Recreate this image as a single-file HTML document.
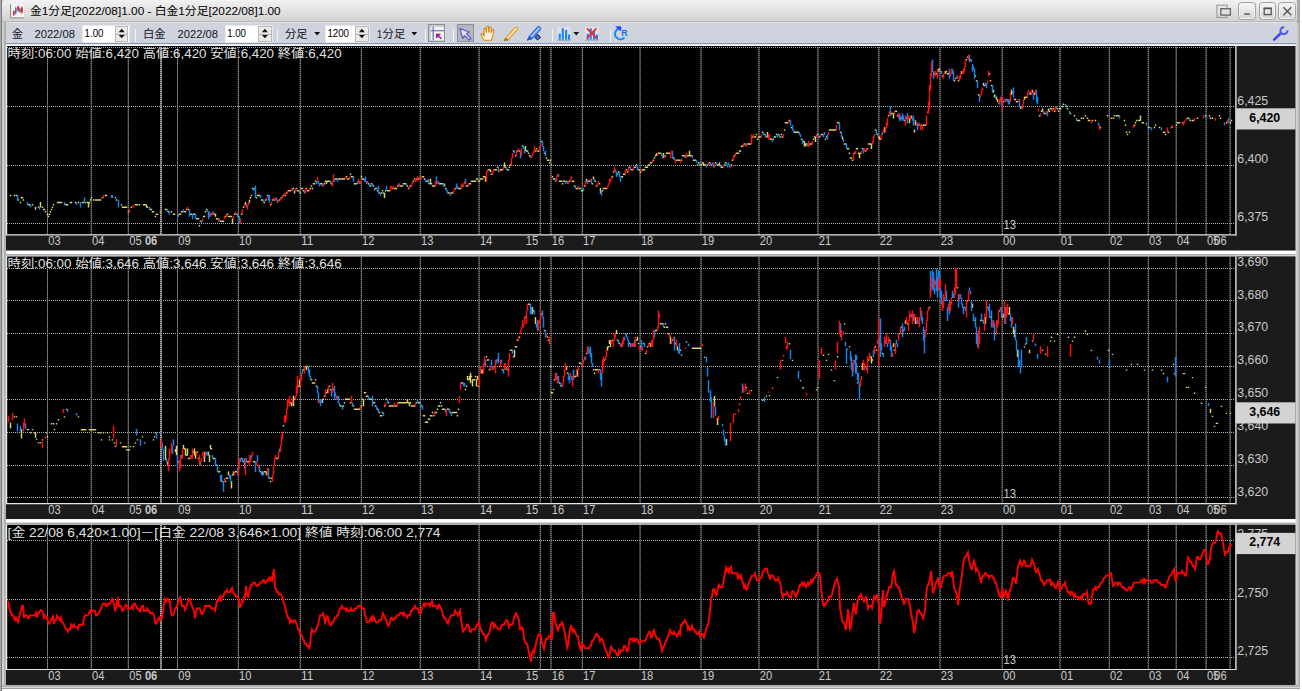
<!DOCTYPE html>
<html><head><meta charset="utf-8"><title>chart</title>
<style>
html,body{margin:0;padding:0;background:#fff;}
body{width:1302px;height:691px;overflow:hidden;position:relative;font-family:"Liberation Sans",sans-serif;}
#win{position:absolute;left:0;top:0;width:1302px;height:691px;background:#e4e4e4;overflow:hidden;}
#lb{position:absolute;left:0;top:0;width:6px;height:691px;background:linear-gradient(90deg,#a8a8a8 0,#a8a8a8 1px,#7c7c7c 1px,#7c7c7c 2.4px,#d0d0d0 2.4px,#d0d0d0 4.2px,#b0b0b0 4.2px,#b0b0b0 6px);}
#rb1{position:absolute;left:1295.5px;top:0;width:6.5px;height:691px;background:linear-gradient(90deg,#d0d0d0 0,#d0d0d0 2.5px,#b0b0b0 2.5px,#b0b0b0 4.3px,#fff 4.3px,#fff 5.6px,#907c7c 5.6px);}
#bb1{position:absolute;left:2.4px;top:684.8px;width:1297.4px;height:6.2px;background:linear-gradient(#b0b0b0 0,#b0b0b0 1.8px,#d8d8d8 1.8px,#d8d8d8 3.2px,#a0a0a0 3.2px,#a0a0a0 4.5px,#fff 4.5px);}
#title{z-index:2;position:absolute;left:2.4px;top:0;width:1294.9px;height:21.4px;background:linear-gradient(#f2f2f2 0%,#e8e8e8 30%,#dcdcdc 70%,#d3d3d3 100%);border-bottom:1.3px solid #b6b6b6;border-top-left-radius:4px;border-top-right-radius:4px;}
#tool{position:absolute;left:6px;top:22.6px;width:1290px;height:20.6px;background:#ced3dd;border-bottom:1.4px solid #8796b4;}
#toolhl{position:absolute;left:6px;top:44.6px;width:1290px;height:1.2px;background:#f4f4f4;}
.inp{position:absolute;top:25px;height:17.6px;background:#fff;border:0.6px solid #e6e9ee;box-sizing:border-box;}
.spin{position:absolute;top:25.6px;width:13.4px;height:16.4px;background:#e9e9e9;border:0.6px solid #b9b9b9;box-sizing:border-box;}
.spin:before{content:"";position:absolute;left:0;top:7.4px;width:100%;height:0.8px;background:#b0b0b0;}
.sep{position:absolute;top:28.6px;width:1.1px;height:13px;background:#f2f4f8;}
.wb{z-index:3;position:absolute;top:2.2px;width:17.6px;height:18px;border:1.6px solid #a0a0a0;border-radius:3.5px;box-shadow:inset 0 0 0 1px #f2f2f2;box-sizing:border-box;background:linear-gradient(#f6f6f6,#d6d6d6);}
.press{position:absolute;top:24px;height:18px;background:#b2b7c0;border:0.8px solid #8a8f9a;box-sizing:border-box;}
svg{position:absolute;left:0;top:0;z-index:4;}
#trb{z-index:2;position:absolute;left:1297.3px;top:0;width:2.3px;height:22.6px;background:#a9a9a9;}
</style></head><body>
<div id="win">
<div id="title"></div>
<div id="tool"></div><div id="toolhl"></div>
<div id="trb"></div><div id="lb"></div><div id="rb1"></div><div id="bb1"></div>
<div class="inp" style="left:81.7px;width:48px"></div><div class="spin" style="left:115px"></div>
<div class="sep" style="left:134.6px"></div>
<div class="inp" style="left:224.7px;width:48.2px"></div><div class="spin" style="left:258.2px"></div>
<div class="sep" style="left:277.4px"></div>
<div class="inp" style="left:324.6px;width:45.6px"></div><div class="spin" style="left:355.2px"></div>
<div class="sep" style="left:425px"></div>
<div class="press" style="left:428.4px;width:16.4px;background:#c3c7d0"></div>
<div class="sep" style="left:453.2px"></div>
<div class="press" style="left:457.2px;width:17px"></div>
<div class="sep" style="left:551.8px"></div>
<div class="sep" style="left:609.8px"></div>
<div class="wb" style="left:1238.4px"></div><div class="wb" style="left:1258.5px"></div><div class="wb" style="left:1278.2px"></div>
<svg width="1302" height="691" viewBox="0 0 1302 691">
<rect x="6" y="46" width="1289.5" height="204.6" fill="#1b1b1b"/><rect x="6" y="46" width="1229.4" height="188.3" fill="#000"/><path d="M7 106.5H1235.4M7 165.5H1235.4M7 223.5H1235.4" stroke="#b4b4b4" stroke-width="1" stroke-dasharray="1 1" fill="none"/><path d="M47.5 47V234.3M91.3 47V234.3M128.3 47V234.3M177.5 47V234.3M238.3 47V234.3M300.3 47V234.3M361.3 47V234.3M420.3 47V234.3M479.1 47V234.3M540.3 47V234.3M551.0 47V234.3M582.3 47V234.3M640.1 47V234.3M701.0 47V234.3M759.0 47V234.3M818.0 47V234.3M878.9 47V234.3M940.0 47V234.3M1002.2 47V234.3M1060.0 47V234.3M1109.3 47V234.3M1148.3 47V234.3M1176.2 47V234.3M1206.1 47V234.3M1230.1 47V234.3" stroke="#545454" stroke-width="1" fill="none"/><path d="M47.5 47V234.3M91.3 47V234.3M128.3 47V234.3M177.5 47V234.3M238.3 47V234.3M300.3 47V234.3M361.3 47V234.3M420.3 47V234.3M479.1 47V234.3M540.3 47V234.3M551.0 47V234.3M582.3 47V234.3M640.1 47V234.3M701.0 47V234.3M759.0 47V234.3M818.0 47V234.3M878.9 47V234.3M940.0 47V234.3M1002.2 47V234.3M1060.0 47V234.3M1109.3 47V234.3M1148.3 47V234.3M1176.2 47V234.3M1206.1 47V234.3M1230.1 47V234.3" stroke="#949494" stroke-width="1" stroke-dasharray="1 1" fill="none"/><path d="M161 47V234.3" stroke="#5c5c5c" stroke-width="2" fill="none"/><path d="M161 47V234.3" stroke="#a4a4a4" stroke-width="2" stroke-dasharray="1 1" fill="none"/><path d="M7 47.5H1235.4" stroke="#a0a0a0" stroke-width="1" stroke-dasharray="1 1" fill="none"/><path d="M6.5 45V234.8" stroke="#ececec" stroke-width="1.4" fill="none"/><path d="M6 234.8H1236.4" stroke="#e4e4e4" stroke-width="1.2" fill="none"/><path d="M1235.9 235.4V46" stroke="#c4c4c4" stroke-width="1.6" fill="none"/><path d="M6 45.4H1236.4" stroke="#f4f4f4" stroke-width="1.3" fill="none"/><path d="M10.5 194.7V196.2M14.5 194.7V196.2M16.5 194.7V196.2M18.5 199.3V200.8M20.5 201.7V203.2M21.5 197.0V198.5M22.5 197.0V198.5M23.5 199.3V200.8M28.5 204.0V205.5M29.5 204.0V205.5M32.5 204.0V205.5M35.5 206.8V209.8M38.5 206.4V207.9M40.5 202.1V207.4M42.5 206.4V207.9M43.5 208.7V210.2M44.5 208.7V210.2M45.5 211.1V212.6M47.5 213.4V214.9M48.5 215.7V217.2M49.5 213.4V214.9M50.5 211.1V212.6M51.5 208.7V210.2M52.5 206.4V207.9M53.5 204.0V205.5M57.5 201.7V203.2M58.5 201.7V203.2M59.5 201.7V203.2M60.5 201.7V203.2M61.5 201.7V203.2M65.5 204.0V205.5M66.5 204.0V205.5M67.5 204.0V205.5M70.5 201.7V203.2M71.5 201.7V203.2M75.5 201.7V203.2M78.5 201.7V203.2M82.5 201.7V203.2M83.5 201.7V203.2M85.5 201.7V203.2M87.5 201.7V203.2M88.5 202.1V207.4M89.5 201.7V203.2M90.5 199.3V200.8M91.5 197.0V198.5M93.5 199.3V200.8M95.5 199.3V200.8M96.5 199.3V200.8M97.5 199.3V200.8M98.5 199.3V200.8M99.5 199.3V200.8M100.5 199.3V200.8M102.5 197.0V198.5M105.5 194.7V196.2M106.5 194.7V196.2M115.5 197.0V198.5M116.5 199.3V200.8M121.5 204.0V205.5M122.5 206.4V207.9M123.5 206.4V207.9M124.5 206.4V207.9M125.5 206.4V207.9M126.5 206.4V207.9M128.5 211.1V212.6M131.5 206.4V207.9M135.5 204.0V205.5M136.5 204.0V205.5M137.5 204.0V205.5M139.5 204.0V205.5M143.5 204.0V205.5M144.5 204.0V205.5M145.5 204.0V205.5M146.5 204.5V207.4M147.5 206.4V207.9M150.5 208.7V210.2M151.5 208.7V210.2M152.5 211.1V212.6M153.5 211.1V212.6M155.5 215.7V217.2M156.5 213.4V214.9M157.5 213.4V214.9M160.5 211.1V212.6M165.5 208.7V210.2M166.5 208.7V210.2M168.5 211.1V212.6M171.5 211.1V212.6M173.5 213.4V214.9M174.5 213.4V214.9M179.5 213.4V214.9M180.5 213.4V214.9M181.5 211.1V212.6M182.5 211.1V212.6M184.5 211.1V212.6M185.5 211.1V212.6M186.5 208.7V210.2M188.5 208.7V210.2M190.5 213.4V214.9M191.5 213.4V214.9M193.5 213.4V214.9M194.5 213.4V214.9M196.5 218.1V219.6M197.5 218.1V219.6M198.5 218.1V219.6M199.5 225.1V226.6M200.5 220.4V221.9M203.5 215.7V217.2M204.5 215.7V217.2M205.5 211.1V212.6M206.5 208.7V210.2M211.5 213.4V214.9M214.5 213.4V214.9M215.5 213.8V216.8M216.5 218.1V219.6M217.5 218.1V219.6M220.5 220.4V221.9M221.5 220.4V221.9M222.5 220.4V221.9M223.5 220.4V221.9M225.5 215.7V217.2M227.5 213.4V214.9M228.5 215.7V217.2M229.5 215.7V217.2M230.5 215.7V217.2M231.5 215.7V217.2M232.5 218.5V223.8M234.5 213.4V214.9M236.5 213.4V214.9M238.5 215.7V217.2M241.5 213.4V214.9M243.5 206.4V207.9M245.5 202.1V205.1M249.5 199.8V202.7M250.5 197.0V198.5M251.5 194.7V196.2M252.5 187.7V189.2M254.5 187.7V189.2M256.5 197.0V198.5M257.5 194.7V196.2M258.5 194.7V196.2M259.5 194.7V196.2M261.5 199.3V200.8M262.5 199.3V200.8M264.5 201.7V203.2M265.5 199.3V200.8M267.5 194.7V196.2M270.5 204.0V205.5M272.5 199.3V200.8M274.5 199.3V200.8M279.5 199.3V200.8M281.5 197.0V198.5M283.5 194.7V196.2M285.5 194.7V196.2M286.5 192.3V193.8M288.5 190.0V191.5M289.5 190.0V191.5M290.5 190.0V191.5M293.5 187.7V189.2M294.5 190.4V193.4M296.5 187.7V189.2M297.5 190.0V191.5M298.5 190.0V191.5M300.5 192.3V193.8M301.5 187.7V189.2M302.5 187.7V189.2M303.5 190.0V191.5M306.5 187.7V189.2M307.5 190.0V191.5M308.5 190.0V191.5M310.5 187.7V189.2M311.5 185.3V186.8M312.5 187.7V189.2M313.5 183.0V184.5M314.5 183.0V184.5M315.5 180.6V182.1M320.5 183.0V184.5M321.5 183.0V184.5M324.5 183.0V184.5M325.5 180.6V182.1M326.5 181.1V184.0M327.5 180.6V182.1M328.5 180.6V182.1M329.5 180.6V182.1M331.5 183.0V184.5M335.5 178.3V179.8M336.5 178.3V179.8M338.5 178.3V179.8M339.5 178.3V179.8M340.5 178.3V179.8M341.5 178.3V179.8M342.5 178.3V179.8M343.5 178.3V179.8M344.5 178.3V179.8M346.5 175.9V177.4M347.5 178.3V179.8M348.5 178.3V179.8M350.5 173.6V175.1M351.5 175.9V177.4M352.5 175.9V177.4M354.5 183.0V184.5M355.5 183.0V184.5M356.5 183.0V184.5M361.5 175.9V177.4M362.5 178.3V179.8M363.5 178.3V179.8M368.5 183.0V184.5M370.5 185.3V186.8M371.5 183.0V184.5M373.5 185.3V186.8M375.5 187.7V189.2M376.5 187.7V189.2M377.5 190.0V191.5M379.5 192.3V193.8M381.5 192.3V193.8M382.5 190.0V191.5M383.5 192.3V193.8M384.5 192.8V198.1M385.5 190.0V191.5M387.5 190.0V191.5M388.5 190.0V191.5M389.5 190.0V191.5M392.5 187.7V189.2M394.5 187.7V189.2M395.5 187.7V189.2M396.5 187.7V189.2M397.5 185.3V186.8M400.5 185.3V186.8M401.5 185.3V186.8M402.5 185.3V186.8M403.5 183.0V184.5M404.5 183.0V184.5M405.5 183.0V184.5M407.5 185.3V186.8M408.5 187.7V189.2M410.5 185.3V186.8M413.5 180.6V182.1M414.5 178.3V179.8M416.5 178.3V179.8M418.5 178.3V179.8M422.5 175.9V177.4M423.5 175.9V177.4M424.5 178.3V179.8M426.5 180.6V182.1M427.5 180.6V182.1M429.5 183.0V184.5M430.5 178.7V184.0M431.5 183.0V184.5M432.5 185.3V186.8M433.5 185.3V186.8M434.5 185.3V186.8M439.5 183.0V184.5M440.5 183.0V184.5M441.5 183.0V184.5M442.5 183.0V184.5M444.5 183.4V186.4M445.5 187.7V189.2M448.5 192.3V193.8M449.5 192.3V193.8M451.5 192.3V193.8M452.5 192.3V193.8M455.5 187.7V189.2M458.5 187.7V189.2M459.5 187.7V189.2M460.5 187.7V189.2M462.5 185.3V186.8M466.5 185.3V186.8M467.5 185.3V186.8M469.5 183.0V184.5M470.5 183.0V184.5M471.5 180.6V182.1M472.5 180.6V182.1M473.5 180.6V182.1M474.5 180.6V182.1M475.5 180.6V182.1M476.5 178.3V179.8M477.5 178.3V179.8M478.5 180.6V182.1M479.5 180.6V182.1M480.5 178.3V179.8M481.5 178.3V179.8M482.5 178.3V179.8M483.5 175.9V177.4M484.5 175.9V177.4M485.5 176.4V181.7M488.5 168.9V170.4M489.5 168.9V170.4M490.5 169.4V172.3M491.5 173.6V175.1M494.5 168.9V170.4M495.5 168.9V170.4M496.5 168.9V170.4M497.5 166.6V168.1M500.5 168.9V170.4M501.5 168.9V170.4M502.5 168.9V170.4M504.5 162.4V167.6M505.5 166.6V168.1M507.5 168.9V170.4M508.5 168.9V170.4M509.5 166.6V168.1M510.5 164.2V165.8M513.5 150.2V151.7M515.5 154.9V156.4M517.5 150.2V151.7M519.5 150.2V151.7M522.5 145.5V147.0M525.5 146.0V151.3M526.5 150.2V151.7M527.5 150.2V151.7M528.5 152.6V154.1M529.5 154.9V156.4M535.5 150.2V151.7M536.5 147.9V149.4M537.5 150.2V151.7M538.5 150.2V151.7M541.5 140.8V142.3M544.5 152.6V154.1M546.5 157.2V158.7M547.5 159.6V161.1M548.5 159.6V161.1M549.5 161.9V163.4M550.5 159.6V161.1M551.5 164.2V165.8M552.5 175.9V177.4M553.5 178.3V179.8M554.5 178.3V179.8M559.5 180.6V182.1M560.5 180.6V182.1M561.5 180.6V182.1M562.5 183.0V184.5M563.5 180.6V182.1M564.5 180.6V182.1M566.5 180.6V182.1M569.5 180.6V182.1M572.5 180.6V182.1M573.5 180.6V182.1M574.5 185.3V186.8M576.5 187.7V189.2M577.5 187.7V189.2M579.5 187.7V189.2M580.5 187.7V189.2M581.5 190.0V191.5M582.5 190.0V191.5M584.5 185.3V186.8M586.5 178.7V181.7M588.5 180.6V182.1M589.5 180.6V182.1M592.5 183.0V184.5M593.5 176.4V179.3M595.5 180.6V182.1M596.5 185.3V186.8M599.5 183.0V184.5M600.5 188.1V193.4M602.5 190.0V191.5M603.5 187.7V189.2M604.5 187.7V189.2M605.5 187.7V189.2M606.5 187.7V189.2M612.5 175.9V177.4M613.5 171.3V172.8M617.5 173.6V175.1M618.5 171.3V172.8M621.5 175.9V177.4M622.5 175.9V177.4M623.5 173.6V175.1M624.5 173.6V175.1M626.5 168.9V170.4M627.5 171.3V172.8M629.5 166.6V168.1M631.5 168.9V170.4M632.5 168.9V170.4M634.5 166.6V168.1M635.5 166.6V168.1M636.5 164.2V165.8M638.5 168.9V170.4M639.5 168.9V170.4M640.5 171.3V172.8M642.5 168.9V170.4M643.5 168.9V170.4M644.5 168.9V170.4M645.5 166.6V168.1M646.5 166.6V168.1M647.5 166.6V168.1M648.5 164.2V165.8M649.5 164.2V165.8M650.5 161.9V163.4M651.5 161.9V163.4M653.5 159.6V161.1M654.5 157.2V158.7M655.5 154.9V156.4M656.5 153.0V155.9M658.5 152.6V154.1M659.5 152.6V154.1M660.5 152.6V154.1M663.5 153.0V158.3M665.5 154.9V156.4M666.5 152.6V154.1M667.5 152.6V154.1M668.5 152.6V154.1M669.5 152.6V154.1M673.5 157.2V158.7M676.5 159.6V161.1M677.5 159.6V161.1M678.5 159.6V161.1M679.5 159.6V161.1M681.5 159.6V161.1M682.5 154.9V156.4M683.5 154.9V156.4M684.5 154.9V156.4M687.5 154.9V156.4M688.5 154.9V156.4M689.5 150.7V155.9M690.5 154.9V156.4M691.5 154.9V156.4M693.5 159.6V161.1M694.5 159.6V161.1M695.5 159.6V161.1M697.5 164.2V165.8M698.5 161.9V163.4M700.5 164.2V165.8M701.5 164.2V165.8M702.5 161.9V163.4M703.5 162.4V165.3M704.5 164.2V165.8M705.5 164.2V165.8M707.5 164.2V165.8M709.5 161.9V163.4M711.5 164.2V165.8M715.5 161.9V163.4M717.5 164.2V165.8M718.5 164.2V165.8M719.5 162.4V165.3M721.5 166.6V168.1M722.5 166.6V168.1M724.5 164.2V165.8M725.5 161.9V163.4M731.5 164.2V165.8M732.5 159.6V161.1M734.5 154.9V156.4M736.5 152.6V154.1M737.5 152.6V154.1M738.5 152.6V154.1M739.5 150.2V151.7M740.5 150.2V151.7M741.5 145.5V147.0M742.5 145.5V147.0M744.5 143.2V144.7M747.5 143.2V144.7M748.5 143.2V144.7M749.5 143.2V144.7M750.5 143.2V144.7M752.5 136.2V137.7M754.5 136.2V137.7M755.5 136.2V137.7M756.5 133.8V135.3M757.5 138.5V140.0M758.5 136.2V137.7M759.5 136.2V137.7M760.5 136.2V137.7M762.5 131.5V133.0M764.5 133.8V135.3M766.5 136.2V137.7M767.5 131.9V137.2M770.5 138.5V140.0M771.5 138.5V140.0M773.5 138.5V140.0M774.5 136.2V137.7M775.5 136.2V137.7M776.5 133.8V135.3M778.5 133.8V135.3M780.5 136.2V137.7M781.5 133.8V135.3M782.5 136.2V137.7M784.5 129.2V130.7M785.5 122.1V123.6M786.5 122.1V123.6M787.5 122.1V123.6M789.5 119.8V121.3M791.5 126.8V128.3M794.5 131.5V133.0M795.5 131.5V133.0M796.5 131.5V133.0M797.5 131.5V133.0M798.5 131.5V133.0M801.5 138.5V140.0M803.5 140.8V142.3M804.5 141.3V146.6M805.5 143.6V146.6M806.5 143.2V144.7M810.5 143.2V144.7M811.5 143.2V144.7M813.5 138.5V140.0M814.5 136.2V137.7M815.5 136.6V141.9M817.5 133.8V135.3M819.5 136.2V137.7M821.5 133.8V135.3M822.5 133.8V135.3M825.5 138.5V140.0M826.5 136.2V137.7M829.5 129.2V130.7M830.5 129.2V130.7M831.5 129.2V130.7M832.5 129.2V130.7M833.5 129.2V130.7M834.5 129.2V130.7M835.5 129.2V130.7M837.5 122.1V123.6M838.5 122.1V123.6M840.5 131.5V133.0M842.5 136.6V139.6M844.5 143.2V144.7M845.5 143.2V144.7M847.5 147.9V149.4M848.5 147.9V149.4M849.5 152.6V154.1M850.5 157.2V158.7M851.5 157.2V158.7M852.5 159.6V161.1M854.5 152.6V154.1M856.5 147.9V149.4M857.5 147.9V149.4M858.5 152.6V154.1M859.5 153.0V158.3M860.5 152.6V154.1M862.5 147.9V149.4M865.5 150.2V151.7M867.5 147.9V149.4M868.5 143.2V144.7M869.5 143.2V144.7M870.5 143.2V144.7M871.5 143.6V148.9M875.5 129.2V130.7M877.5 133.8V135.3M878.5 136.2V137.7M879.5 136.6V139.6M880.5 138.5V140.0M884.5 127.3V132.5M888.5 115.1V116.6M891.5 112.8V114.3M892.5 112.8V114.3M893.5 113.2V118.5M895.5 110.4V111.9M896.5 110.4V111.9M897.5 115.1V116.6M901.5 117.5V119.0M904.5 119.8V121.3M906.5 117.5V119.0M909.5 117.9V123.2M911.5 115.6V118.5M914.5 129.6V132.5M915.5 120.2V125.5M918.5 124.5V126.0M921.5 124.5V126.0M923.5 124.5V126.0M924.5 124.5V126.0M925.5 124.5V126.0M934.5 73.0V74.5M936.5 73.0V74.5M938.5 68.8V71.7M939.5 68.3V69.8M940.5 70.7V72.2M942.5 75.3V76.8M945.5 71.1V74.0M946.5 70.7V72.2M947.5 73.0V74.5M948.5 73.0V74.5M954.5 80.0V81.5M955.5 77.7V79.2M958.5 80.0V81.5M961.5 71.1V74.0M966.5 59.0V60.5M967.5 56.6V58.1M970.5 59.0V60.5M975.5 75.3V76.8M976.5 80.0V81.5M978.5 94.1V95.6M983.5 82.8V85.7M984.5 84.7V86.2M989.5 73.0V74.5M990.5 80.0V81.5M991.5 84.7V86.2M993.5 89.8V92.8M994.5 94.5V97.4M996.5 96.8V99.8M997.5 99.2V102.1M1003.5 101.1V102.6M1006.5 98.7V100.2M1011.5 89.8V95.1M1012.5 91.7V93.2M1014.5 98.7V100.2M1015.5 98.7V100.2M1016.5 101.1V102.6M1017.5 101.1V102.6M1020.5 106.2V109.1M1024.5 96.8V99.8M1025.5 96.4V97.9M1026.5 96.4V97.9M1030.5 92.2V95.1M1032.5 89.8V92.8M1034.5 92.2V95.1M1039.5 115.1V116.6M1041.5 110.4V111.9M1042.5 108.5V111.5M1044.5 112.8V114.3M1045.5 112.8V114.3M1048.5 108.5V111.5M1049.5 110.4V111.9M1050.5 108.1V109.6M1051.5 108.1V109.6M1053.5 108.1V109.6M1054.5 110.4V111.9M1057.5 108.1V109.6M1058.5 110.4V111.9M1059.5 108.1V109.6M1060.5 108.1V109.6M1062.5 105.8V107.2M1063.5 103.4V104.9M1066.5 105.8V107.2M1067.5 108.1V109.6M1070.5 112.8V114.3M1074.5 115.1V116.6M1077.5 119.8V121.3M1078.5 119.8V121.3M1079.5 119.8V121.3M1081.5 117.5V119.0M1083.5 117.5V119.0M1085.5 115.1V116.6M1087.5 117.5V119.0M1088.5 119.8V121.3M1089.5 119.8V121.3M1092.5 119.8V121.3M1095.5 119.8V121.3M1100.5 126.8V128.3M1107.5 115.1V116.6M1111.5 117.5V119.0M1113.5 117.5V119.0M1114.5 115.1V116.6M1116.5 115.1V116.6M1117.5 115.1V116.6M1118.5 115.1V116.6M1124.5 119.8V121.3M1125.5 124.5V126.0M1126.5 131.5V133.0M1127.5 133.8V135.3M1129.5 131.5V133.0M1134.5 124.5V126.0M1135.5 122.1V123.6M1136.5 119.8V121.3M1138.5 119.8V121.3M1139.5 119.8V121.3M1140.5 115.6V120.8M1142.5 122.1V123.6M1143.5 122.1V123.6M1148.5 126.8V128.3M1149.5 126.8V128.3M1154.5 126.8V128.3M1155.5 124.5V126.0M1159.5 126.8V128.3M1163.5 131.5V133.0M1164.5 131.5V133.0M1165.5 133.8V135.3M1168.5 131.5V133.0M1171.5 126.8V128.3M1176.5 124.5V126.0M1177.5 122.1V123.6M1178.5 122.1V123.6M1179.5 122.1V123.6M1182.5 122.1V123.6M1187.5 117.5V119.0M1188.5 117.5V119.0M1190.5 119.8V121.3M1192.5 119.8V121.3M1193.5 119.8V121.3M1197.5 117.5V119.0M1205.5 115.1V116.6M1209.5 115.1V116.6M1210.5 117.5V119.0M1212.5 117.5V119.0M1219.5 115.1V116.6M1220.5 117.5V119.0M1226.5 122.1V123.6M1230.5 122.1V123.6M1231.5 119.8V121.3" stroke="#dcd46a" stroke-width="1.45" fill="none"/><path d="M17.5 195.1V200.4M27.5 202.1V205.1M30.5 204.5V207.4M39.5 206.8V209.8M64.5 202.1V205.1M76.5 202.1V205.1M80.5 202.1V207.4M84.5 197.5V202.7M111.5 195.1V198.1M112.5 195.1V198.1M118.5 199.8V207.4M149.5 206.8V209.8M167.5 209.2V212.1M169.5 211.5V214.4M178.5 213.8V216.8M183.5 209.2V212.1M189.5 209.2V216.8M192.5 213.8V219.1M195.5 213.8V219.1M201.5 220.9V223.8M207.5 209.2V212.1M208.5 211.5V219.1M209.5 211.5V216.8M213.5 211.5V214.4M218.5 218.5V221.5M237.5 213.8V216.8M239.5 216.2V223.8M246.5 204.5V207.4M253.5 188.1V191.0M255.5 185.8V198.1M260.5 195.1V198.1M263.5 199.8V202.7M268.5 195.1V200.4M269.5 195.1V202.7M276.5 197.5V200.4M277.5 199.8V202.7M292.5 188.1V191.0M299.5 190.4V193.4M304.5 190.4V193.4M316.5 181.1V184.0M318.5 181.1V184.0M319.5 183.4V186.4M322.5 183.4V186.4M330.5 181.1V184.0M334.5 178.7V181.7M337.5 178.7V181.7M353.5 176.4V181.7M357.5 181.1V184.0M359.5 181.1V184.0M364.5 178.7V181.7M365.5 176.4V181.7M366.5 181.1V184.0M369.5 183.4V186.4M372.5 183.4V186.4M374.5 188.1V191.0M378.5 185.8V193.4M380.5 192.8V195.7M386.5 185.8V191.0M399.5 183.4V186.4M406.5 183.4V186.4M420.5 176.4V179.3M425.5 178.7V181.7M428.5 178.7V184.0M436.5 176.4V184.0M438.5 181.1V184.0M443.5 183.4V186.4M446.5 188.1V191.0M447.5 190.4V193.4M450.5 192.8V195.7M456.5 183.4V188.7M457.5 185.8V188.7M465.5 178.7V184.0M498.5 167.0V172.3M506.5 167.0V170.0M514.5 150.7V153.6M520.5 150.7V158.3M523.5 146.0V148.9M524.5 148.3V153.6M530.5 155.3V158.3M542.5 141.3V146.6M543.5 146.0V151.3M545.5 150.7V155.9M555.5 178.7V181.7M558.5 174.1V177.0M565.5 181.1V184.0M567.5 181.1V184.0M575.5 185.8V188.7M583.5 188.1V191.0M587.5 181.1V184.0M591.5 178.7V184.0M594.5 178.7V181.7M601.5 190.4V195.7M615.5 169.4V172.3M616.5 171.7V177.0M619.5 171.7V177.0M620.5 176.4V181.7M630.5 167.0V170.0M637.5 164.7V170.0M661.5 153.0V155.9M662.5 155.3V158.3M672.5 150.7V158.3M674.5 157.7V160.6M685.5 155.3V158.3M692.5 155.3V158.3M696.5 160.0V163.0M699.5 162.4V165.3M706.5 164.7V167.6M710.5 162.4V165.3M713.5 162.4V167.6M716.5 162.4V165.3M720.5 164.7V167.6M726.5 162.4V165.3M727.5 164.7V167.6M728.5 162.4V165.3M729.5 164.7V167.6M745.5 143.6V146.6M763.5 131.9V134.9M765.5 134.3V137.2M772.5 139.0V141.9M777.5 134.3V137.2M779.5 134.3V137.2M790.5 120.2V125.5M792.5 124.9V130.2M793.5 129.6V132.5M799.5 131.9V134.9M800.5 134.3V137.2M802.5 139.0V144.2M807.5 143.6V146.6M818.5 134.3V137.2M823.5 134.3V137.2M824.5 131.9V134.9M827.5 134.3V139.6M839.5 122.6V130.2M841.5 131.9V137.2M843.5 139.0V141.9M846.5 143.6V148.9M863.5 148.3V153.6M876.5 129.6V134.9M882.5 131.9V134.9M890.5 106.2V116.2M899.5 113.2V120.8M900.5 115.6V120.8M902.5 113.2V120.8M903.5 115.6V120.8M907.5 113.2V123.2M912.5 117.9V120.8M913.5 115.6V125.5M917.5 122.6V130.2M932.5 59.4V71.7M933.5 71.1V78.7M941.5 71.1V74.0M949.5 68.8V78.7M952.5 68.8V74.0M953.5 71.1V81.1M957.5 75.8V78.7M969.5 54.7V62.3M971.5 59.4V62.3M972.5 64.1V71.7M973.5 66.4V69.4M974.5 68.8V78.7M977.5 80.5V88.1M979.5 94.5V102.1M985.5 82.8V85.7M986.5 82.8V88.1M992.5 85.1V92.8M995.5 94.5V97.4M998.5 101.5V104.5M1001.5 96.8V106.8M1005.5 99.2V102.1M1007.5 99.2V102.1M1008.5 99.2V104.5M1009.5 99.2V104.5M1013.5 87.5V97.4M1019.5 99.2V106.8M1021.5 106.2V109.1M1029.5 92.2V95.1M1033.5 92.2V99.8M1036.5 89.8V102.1M1037.5 96.8V104.5M1043.5 110.9V113.8M1047.5 110.9V116.2M1056.5 106.2V109.1M1065.5 103.9V106.8M1069.5 110.9V113.8M1076.5 117.9V120.8M1098.5 122.6V125.5M1119.5 115.6V118.5M1146.5 122.6V125.5M1151.5 127.3V130.2M1161.5 127.3V130.2M1189.5 117.9V120.8M1206.5 115.6V118.5M1224.5 122.6V125.5M1228.5 117.9V123.2" stroke="#1585f0" stroke-width="1.45" fill="none"/><path d="M103.5 195.1V198.1M129.5 209.2V212.1M133.5 204.5V207.4M187.5 206.8V209.8M202.5 218.5V221.5M210.5 213.8V216.8M212.5 211.5V214.4M219.5 218.5V221.5M224.5 216.2V219.1M226.5 213.8V216.8M233.5 216.2V219.1M235.5 211.5V214.4M240.5 218.5V223.8M242.5 209.2V214.4M244.5 204.5V207.4M247.5 204.5V209.8M248.5 202.1V205.1M266.5 197.5V200.4M271.5 202.1V205.1M273.5 197.5V200.4M275.5 197.5V200.4M278.5 199.8V202.7M280.5 197.5V200.4M282.5 195.1V198.1M284.5 192.8V195.7M287.5 190.4V193.4M291.5 188.1V191.0M295.5 188.1V191.0M305.5 188.1V193.4M309.5 188.1V191.0M317.5 176.4V181.7M323.5 183.4V186.4M332.5 181.1V186.4M333.5 174.1V181.7M345.5 176.4V179.3M349.5 176.4V179.3M358.5 178.7V184.0M360.5 181.1V184.0M367.5 181.1V184.0M390.5 185.8V191.0M391.5 185.8V188.7M393.5 185.8V188.7M398.5 183.4V186.4M409.5 185.8V188.7M411.5 183.4V186.4M412.5 181.1V184.0M415.5 178.7V181.7M417.5 176.4V181.7M419.5 176.4V179.3M421.5 176.4V179.3M435.5 181.1V186.4M437.5 181.1V184.0M453.5 190.4V193.4M454.5 188.1V191.0M461.5 183.4V188.7M463.5 183.4V186.4M464.5 181.1V184.0M468.5 183.4V186.4M486.5 171.7V181.7M487.5 169.4V172.3M492.5 171.7V174.7M493.5 169.4V172.3M499.5 169.4V172.3M503.5 167.0V170.0M511.5 157.7V165.3M512.5 153.0V158.3M516.5 150.7V155.9M518.5 148.3V151.3M521.5 148.3V155.9M531.5 155.3V158.3M532.5 153.0V155.9M533.5 150.7V153.6M534.5 146.0V151.3M539.5 146.0V151.3M540.5 143.6V146.6M556.5 176.4V181.7M557.5 174.1V177.0M568.5 181.1V184.0M570.5 178.7V181.7M571.5 176.4V179.3M578.5 185.8V188.7M585.5 181.1V186.4M590.5 178.7V181.7M597.5 183.4V186.4M598.5 181.1V184.0M607.5 185.8V188.7M608.5 183.4V186.4M609.5 178.7V184.0M610.5 178.7V181.7M611.5 176.4V179.3M614.5 167.0V172.3M625.5 169.4V174.7M628.5 167.0V172.3M633.5 167.0V170.0M641.5 169.4V172.3M652.5 160.0V163.0M657.5 153.0V155.9M664.5 155.3V158.3M670.5 153.0V158.3M671.5 150.7V153.6M675.5 160.0V163.0M680.5 160.0V163.0M686.5 153.0V158.3M708.5 162.4V165.3M712.5 162.4V165.3M714.5 164.7V167.6M723.5 164.7V167.6M730.5 164.7V167.6M733.5 155.3V160.6M735.5 153.0V155.9M743.5 143.6V146.6M746.5 143.6V146.6M751.5 134.3V144.2M753.5 134.3V137.2M761.5 134.3V137.2M768.5 134.3V139.6M769.5 134.3V139.6M783.5 134.3V137.2M788.5 120.2V123.2M808.5 141.3V146.6M809.5 143.6V146.6M812.5 141.3V144.2M816.5 134.3V137.2M820.5 134.3V137.2M828.5 131.9V134.9M836.5 124.9V130.2M853.5 153.0V160.6M855.5 150.7V153.6M861.5 150.7V153.6M864.5 148.3V151.3M866.5 148.3V151.3M872.5 141.3V144.2M873.5 136.6V141.9M874.5 134.3V137.2M881.5 134.3V139.6M883.5 129.6V132.5M885.5 127.3V132.5M886.5 122.6V127.9M887.5 117.9V125.5M889.5 110.9V116.2M894.5 110.9V113.8M898.5 113.2V118.5M905.5 115.6V125.5M908.5 115.6V118.5M910.5 115.6V120.8M916.5 122.6V125.5M919.5 122.6V125.5M920.5 124.9V130.2M922.5 124.9V130.2M926.5 115.6V125.5M927.5 110.9V113.8M928.5 101.5V113.8M929.5 85.1V109.1M930.5 73.4V90.4M931.5 61.7V76.4M935.5 71.1V76.4M937.5 68.8V78.7M943.5 73.4V78.7M944.5 71.1V74.0M950.5 73.4V76.4M951.5 68.8V74.0M956.5 75.8V78.7M959.5 75.8V81.1M960.5 73.4V78.7M962.5 71.1V74.0M963.5 68.8V74.0M964.5 66.4V71.7M965.5 59.4V67.0M968.5 54.7V60.0M980.5 94.5V97.4M981.5 89.8V95.1M982.5 87.5V90.4M987.5 80.5V83.4M988.5 71.1V76.4M999.5 99.2V104.5M1000.5 96.8V102.1M1002.5 96.8V109.1M1004.5 99.2V102.1M1010.5 92.2V102.1M1018.5 99.2V102.1M1022.5 103.9V109.1M1023.5 99.2V104.5M1027.5 92.2V97.4M1028.5 89.8V92.8M1031.5 89.8V95.1M1035.5 89.8V95.1M1038.5 108.5V111.5M1040.5 113.2V116.2M1046.5 110.9V113.8M1052.5 108.5V111.5M1055.5 106.2V111.5M1091.5 120.2V123.2M1099.5 124.9V130.2M1133.5 124.9V127.9M1167.5 127.3V132.5M1172.5 124.9V127.9M1183.5 122.6V125.5M1184.5 120.2V123.2M1186.5 117.9V120.8M1194.5 117.9V120.8M1203.5 115.6V118.5M1215.5 117.9V120.8M1227.5 120.2V123.2" stroke="#ff1010" stroke-width="1.45" fill="none"/>
<g font-family="'Liberation Sans','Noto Sans CJK JP',sans-serif" font-size="12" fill="#cacaca">
<text x="48.3" y="244.8" textLength="12.4" lengthAdjust="spacingAndGlyphs">03</text>
<text x="92.1" y="244.8" textLength="12.4" lengthAdjust="spacingAndGlyphs">04</text>
<text x="129.3" y="244.8" textLength="12.4" lengthAdjust="spacingAndGlyphs">05</text>
<text x="144.9" y="244.8" textLength="12.4" lengthAdjust="spacingAndGlyphs" font-weight="bold">06</text>
<text x="178.3" y="244.8" textLength="12.4" lengthAdjust="spacingAndGlyphs">09</text>
<text x="239.1" y="244.8" textLength="12.4" lengthAdjust="spacingAndGlyphs">10</text>
<text x="301.1" y="244.8" textLength="12.4" lengthAdjust="spacingAndGlyphs">11</text>
<text x="362.1" y="244.8" textLength="12.4" lengthAdjust="spacingAndGlyphs">12</text>
<text x="421.1" y="244.8" textLength="12.4" lengthAdjust="spacingAndGlyphs">13</text>
<text x="479.9" y="244.8" textLength="12.4" lengthAdjust="spacingAndGlyphs">14</text>
<text x="525.7" y="244.8" textLength="12.4" lengthAdjust="spacingAndGlyphs">15</text>
<text x="551.8" y="244.8" textLength="12.4" lengthAdjust="spacingAndGlyphs">16</text>
<text x="583.1" y="244.8" textLength="12.4" lengthAdjust="spacingAndGlyphs">17</text>
<text x="640.9" y="244.8" textLength="12.4" lengthAdjust="spacingAndGlyphs">18</text>
<text x="701.8" y="244.8" textLength="12.4" lengthAdjust="spacingAndGlyphs">19</text>
<text x="759.8" y="244.8" textLength="12.4" lengthAdjust="spacingAndGlyphs">20</text>
<text x="818.8" y="244.8" textLength="12.4" lengthAdjust="spacingAndGlyphs">21</text>
<text x="879.7" y="244.8" textLength="12.4" lengthAdjust="spacingAndGlyphs">22</text>
<text x="940.8" y="244.8" textLength="12.4" lengthAdjust="spacingAndGlyphs">23</text>
<text x="1003" y="244.8" textLength="12.4" lengthAdjust="spacingAndGlyphs">00</text>
<text x="1060.8" y="244.8" textLength="12.4" lengthAdjust="spacingAndGlyphs">01</text>
<text x="1110.1" y="244.8" textLength="12.4" lengthAdjust="spacingAndGlyphs">02</text>
<text x="1149.1" y="244.8" textLength="12.4" lengthAdjust="spacingAndGlyphs">03</text>
<text x="1177" y="244.8" textLength="12.4" lengthAdjust="spacingAndGlyphs">04</text>
<text x="1206.9" y="244.8" textLength="12.4" lengthAdjust="spacingAndGlyphs">05</text>
<text x="1214.3" y="244.8" textLength="12.4" lengthAdjust="spacingAndGlyphs">06</text>
<text x="1003.5" y="229.4" textLength="12.4" lengthAdjust="spacingAndGlyphs">13</text>
<text x="1237.3" y="104.5" textLength="30.9" lengthAdjust="spacingAndGlyphs">6,425</text>
<text x="1237.3" y="162.7" textLength="30.9" lengthAdjust="spacingAndGlyphs">6,400</text>
<text x="1237.3" y="221.4" textLength="30.9" lengthAdjust="spacingAndGlyphs">6,375</text>
<text x="7.6" y="57.9" fill="#e0e0e0" textLength="334" lengthAdjust="spacingAndGlyphs">時刻:06:00 始値:6,420 高値:6,420 安値:6,420 終値:6,420</text>
</g>
<rect x="1235.6000000000001" y="108.3" width="59.899999999999906" height="21.2" fill="#d3d3d3"/><text x="1249.3" y="121.6" font-family="'Liberation Sans',sans-serif" font-size="12" font-weight="bold" fill="#000" textLength="30.9" lengthAdjust="spacingAndGlyphs">6,420</text><rect x="6" y="256.4" width="1289.5" height="262.6" fill="#1b1b1b"/><rect x="6" y="256.4" width="1229.4" height="246.8" fill="#000"/><path d="M7 268.5H1235.4M7 300.5H1235.4M7 333.5H1235.4M7 366.5H1235.4M7 399.5H1235.4M7 432.5H1235.4M7 465.5H1235.4M7 497.5H1235.4" stroke="#b4b4b4" stroke-width="1" stroke-dasharray="1 1" fill="none"/><path d="M47.5 257V503.2M91.3 257V503.2M128.3 257V503.2M177.5 257V503.2M238.3 257V503.2M300.3 257V503.2M361.3 257V503.2M420.3 257V503.2M479.1 257V503.2M540.3 257V503.2M551.0 257V503.2M582.3 257V503.2M640.1 257V503.2M701.0 257V503.2M759.0 257V503.2M818.0 257V503.2M878.9 257V503.2M940.0 257V503.2M1002.2 257V503.2M1060.0 257V503.2M1109.3 257V503.2M1148.3 257V503.2M1176.2 257V503.2M1206.1 257V503.2M1230.1 257V503.2" stroke="#545454" stroke-width="1" fill="none"/><path d="M47.5 257V503.2M91.3 257V503.2M128.3 257V503.2M177.5 257V503.2M238.3 257V503.2M300.3 257V503.2M361.3 257V503.2M420.3 257V503.2M479.1 257V503.2M540.3 257V503.2M551.0 257V503.2M582.3 257V503.2M640.1 257V503.2M701.0 257V503.2M759.0 257V503.2M818.0 257V503.2M878.9 257V503.2M940.0 257V503.2M1002.2 257V503.2M1060.0 257V503.2M1109.3 257V503.2M1148.3 257V503.2M1176.2 257V503.2M1206.1 257V503.2M1230.1 257V503.2" stroke="#949494" stroke-width="1" stroke-dasharray="1 1" fill="none"/><path d="M161 257V503.2" stroke="#5c5c5c" stroke-width="2" fill="none"/><path d="M161 257V503.2" stroke="#a4a4a4" stroke-width="2" stroke-dasharray="1 1" fill="none"/><path d="M6.5 255.39999999999998V503.7" stroke="#ececec" stroke-width="1.4" fill="none"/><path d="M6 503.7H1236.4" stroke="#e4e4e4" stroke-width="1.2" fill="none"/><path d="M1235.9 504.3V256.4" stroke="#c4c4c4" stroke-width="1.6" fill="none"/><path d="M6 255.79999999999998H1236.4" stroke="#c8c8c8" stroke-width="1.3" fill="none"/><path d="M10.5 422.6V428.2M14.5 416.3V417.6M16.5 416.3V417.6M21.5 429.0V438.5M27.5 429.0V430.3M28.5 429.0V430.3M32.5 429.0V430.3M30.5 432.2V433.5M34.5 432.2V433.5M35.5 432.2V437.7M36.5 438.5V439.8M38.5 442.2V443.5M40.5 442.2V443.5M42.5 439.3V440.6M46.5 432.2V433.5M47.5 436.2V437.5M51.5 423.1V424.4M53.5 423.1V424.4M54.5 429.0V430.3M56.5 423.1V424.4M58.5 419.1V420.4M64.5 416.3V417.6M66.5 408.8V410.1M78.5 416.3V417.6M98.5 432.2V433.5M100.5 432.2V433.5M103.5 432.2V433.5M107.5 432.2V433.5M101.5 439.3V440.6M109.5 436.2V437.5M109.5 439.3V440.6M112.5 439.3V440.6M114.5 442.2V443.5M115.5 445.7V447.0M120.5 442.2V443.5M130.5 446.0V447.3M133.5 446.0V447.3M135.5 442.2V443.5M137.5 439.3V440.6M142.5 436.2V437.5M144.5 442.2V443.5M153.5 439.3V440.6M154.5 436.2V437.5M155.5 432.2V433.5M165.5 445.7V460.0M167.5 461.6V464.8M175.5 448.9V452.1M176.5 445.7V455.3M681.5 354.4V355.7M686.5 341.2V342.5M704.5 356.8V358.1M714.5 396.1V406.6M717.5 418.1V425.1M726.5 439.0V445.5M746.5 386.9V388.2M747.5 392.7V394.0M751.5 389.9V391.2M762.5 399.6V400.9M766.5 395.4V396.8M769.5 395.0V396.3M777.5 376.9V378.2M782.5 359.8V361.1M789.5 342.9V344.5M792.5 359.8V361.1M800.5 379.9V381.2M803.5 386.9V388.2M816.5 389.2V390.5M817.5 386.9V388.2M823.5 354.4V356.1M826.5 359.8V361.1M828.5 353.7V355.0M831.5 369.5V370.8M834.5 379.9V381.2M837.5 356.1V357.4M844.5 323.2V324.5M849.5 346.3V347.6M851.5 359.8V361.1M857.5 382.2V383.5M1024.5 346.3V347.6M1025.5 343.5V344.8M1029.5 349.8V353.3M1032.5 340.5V341.8M1042.5 349.8V351.1M1045.5 353.7V355.0M1050.5 340.5V341.8M1051.5 336.6V337.9M1054.5 340.5V341.8M1057.5 333.6V334.9M1068.5 336.6V337.9M1072.5 340.5V341.8M1074.5 336.6V337.9M1085.5 330.6V331.9M1087.5 333.6V334.9M1091.5 349.8V351.1M1108.5 349.8V351.1M1109.5 366.7V368.0M1112.5 353.7V355.0M1126.5 369.5V370.8M1131.5 363.7V365.0M1137.5 363.7V365.0M1144.5 369.5V370.8M1152.5 369.5V370.8M1161.5 369.5V370.8M1163.5 373.0V374.3M1173.5 363.7V365.0M1174.5 373.0V374.3M1183.5 373.0V374.3M1184.5 373.0V374.3M1192.5 376.9V378.2M1186.5 386.8V388.1M1188.5 386.8V388.1M1194.5 392.6V393.9M1201.5 402.6V403.9M1205.5 386.8V388.1M1210.5 408.8V413.0M1212.5 415.8V417.1M1214.5 425.8V427.1M1216.5 422.7V424.0M1217.5 422.7V424.0M1221.5 405.8V407.1M1226.5 412.8V414.1M1230.5 412.8V414.1M81.5 429.0V430.4M82.5 429.0V430.4M83.5 429.0V430.4M84.5 429.0V430.4M85.5 429.0V430.4M89.5 429.0V430.4M90.5 429.0V430.4M91.5 429.0V430.4M92.5 429.0V430.4M93.5 429.0V430.4M94.5 429.0V430.4M95.5 429.0V430.4M122.5 446.0V447.4M123.5 446.0V447.4M124.5 446.0V447.4M125.5 446.0V447.4M126.5 446.0V447.4M126.5 449.2V450.6M127.5 449.2V450.6M128.5 449.2V450.6M129.5 449.2V450.6M692.5 347.5V348.9M693.5 347.5V348.9M694.5 347.5V348.9M695.5 347.5V348.9M696.5 347.5V348.9M697.5 347.5V348.9M698.5 347.5V348.9M699.5 347.5V348.9M700.5 347.5V348.9M178.5 461.1V462.6M179.5 461.1V462.6M183.5 445.1V449.0M184.5 447.9V449.4M185.5 448.4V455.5M186.5 454.5V456.0M187.5 448.4V455.5M188.5 457.8V459.3M189.5 457.8V459.3M193.5 451.2V452.7M194.5 448.4V455.5M195.5 451.7V458.8M197.5 451.2V452.7M198.5 457.8V459.3M204.5 451.7V462.1M208.5 451.7V455.5M209.5 454.9V462.1M210.5 445.1V449.0M211.5 447.9V449.4M213.5 457.8V459.3M214.5 457.8V459.3M216.5 464.4V465.9M218.5 470.9V472.4M219.5 470.9V472.4M222.5 480.8V482.3M225.5 480.8V482.3M226.5 477.5V479.0M227.5 477.5V479.0M228.5 471.4V475.3M231.5 481.2V488.4M232.5 474.2V475.7M233.5 471.4V475.3M235.5 470.9V472.4M236.5 470.9V472.4M241.5 457.8V459.3M243.5 461.1V462.6M247.5 461.1V462.6M248.5 461.1V462.6M253.5 461.1V462.6M254.5 461.1V462.6M260.5 470.9V472.4M262.5 471.4V475.3M264.5 470.9V472.4M265.5 470.9V472.4M266.5 471.4V475.3M269.5 477.5V479.0M270.5 480.8V482.3M271.5 477.5V479.0M276.5 457.8V459.3M277.5 457.8V459.3M283.5 424.9V426.4M290.5 401.9V403.4M291.5 402.4V406.3M293.5 395.8V406.3M294.5 398.6V400.1M298.5 385.5V387.0M299.5 379.4V386.6M303.5 369.1V370.6M305.5 365.8V367.3M306.5 366.2V370.1M307.5 365.8V367.3M311.5 378.9V380.4M312.5 382.2V383.7M313.5 382.2V383.7M314.5 382.2V383.7M315.5 378.9V380.4M316.5 385.5V387.0M322.5 399.1V403.0M323.5 398.6V400.1M324.5 395.4V396.9M326.5 392.1V393.6M327.5 389.2V393.1M329.5 385.5V387.0M330.5 388.8V390.3M333.5 388.8V390.3M340.5 405.2V406.7M341.5 405.2V406.7M343.5 405.2V406.7M344.5 401.9V403.4M345.5 398.6V400.1M346.5 398.6V400.1M347.5 398.6V400.1M348.5 398.6V400.1M349.5 398.6V400.1M350.5 401.9V403.4M353.5 405.2V406.7M354.5 408.5V410.0M355.5 408.5V410.0M356.5 408.5V410.0M357.5 408.5V410.0M358.5 408.5V410.0M359.5 408.5V410.0M361.5 405.2V406.7M362.5 398.6V400.1M363.5 399.1V406.3M364.5 392.1V393.6M365.5 392.1V393.6M366.5 395.4V396.9M367.5 395.4V396.9M369.5 398.6V400.1M370.5 398.6V400.1M371.5 398.6V400.1M373.5 401.9V403.4M374.5 401.9V403.4M375.5 405.2V406.7M377.5 408.5V410.0M379.5 411.8V413.3M380.5 415.1V416.6M381.5 415.1V416.6M382.5 411.8V413.3M384.5 405.2V406.7M386.5 398.6V400.1M388.5 401.9V403.4M389.5 405.2V406.7M390.5 405.2V406.7M391.5 405.2V406.7M392.5 405.2V406.7M393.5 405.2V406.7M395.5 405.2V406.7M396.5 405.2V406.7M398.5 401.9V403.4M399.5 401.9V403.4M400.5 401.9V403.4M401.5 401.9V403.4M402.5 401.9V403.4M403.5 401.9V403.4M404.5 401.9V403.4M405.5 401.9V403.4M406.5 401.9V403.4M407.5 399.1V403.0M408.5 401.9V403.4M409.5 402.4V406.3M410.5 401.9V403.4M411.5 405.2V406.7M412.5 405.2V406.7M413.5 405.2V406.7M414.5 405.2V406.7M416.5 401.9V403.4M418.5 401.9V403.4M419.5 401.9V403.4M421.5 405.2V406.7M423.5 415.1V416.6M424.5 415.1V416.6M425.5 421.6V423.1M426.5 421.6V423.1M427.5 421.6V423.1M428.5 418.4V419.9M429.5 418.4V419.9M430.5 415.1V416.6M431.5 415.1V416.6M432.5 411.8V413.3M433.5 415.1V416.6M435.5 411.8V413.3M436.5 411.8V413.3M437.5 408.5V410.0M438.5 405.2V406.7M439.5 405.2V406.7M440.5 401.9V403.4M441.5 405.2V406.7M442.5 408.5V410.0M443.5 408.5V410.0M444.5 408.5V410.0M447.5 408.5V410.0M448.5 408.5V410.0M450.5 411.8V413.3M452.5 411.8V413.3M453.5 411.8V413.3M454.5 411.8V413.3M455.5 411.8V413.3M456.5 411.8V413.3M457.5 415.1V416.6M458.5 408.5V410.0M461.5 382.2V383.7M462.5 382.2V383.7M465.5 388.8V390.3M466.5 385.5V387.0M467.5 376.1V380.0M468.5 378.9V380.4M469.5 376.1V380.0M470.5 372.8V383.3M471.5 375.7V377.2M472.5 379.4V386.6M473.5 378.9V380.4M474.5 378.9V380.4M475.5 375.7V377.2M476.5 379.4V386.6M477.5 376.1V380.0M478.5 385.5V387.0M481.5 369.5V373.4M482.5 369.5V373.4M486.5 355.9V357.4M487.5 359.2V360.7M488.5 359.2V360.7M489.5 369.1V370.6M494.5 365.8V367.3M497.5 359.2V360.7M499.5 365.8V367.3M502.5 369.1V370.6M507.5 369.1V370.6M510.5 349.4V350.9M511.5 349.4V350.9M513.5 355.9V357.4M514.5 349.8V357.0M515.5 346.1V347.6M516.5 346.1V347.6M517.5 339.5V341.0M519.5 336.2V337.7M525.5 316.5V318.0M528.5 303.4V304.9M529.5 303.4V304.9M532.5 307.1V314.3M533.5 310.0V311.5M535.5 317.0V324.1M541.5 313.2V314.7M544.5 329.7V331.2M547.5 336.2V337.7M548.5 339.5V341.0M550.5 365.8V367.3M551.5 392.1V393.6M552.5 392.1V393.6M553.5 388.8V390.3M554.5 378.9V380.4M559.5 382.2V383.7M561.5 385.5V387.0M566.5 366.2V370.1M567.5 372.4V373.9M574.5 375.7V377.2M575.5 375.7V377.2M577.5 369.5V376.7M579.5 362.5V364.0M580.5 362.5V364.0M586.5 352.7V354.2M593.5 369.1V370.6M594.5 372.4V373.9M595.5 369.1V370.6M596.5 369.1V370.6M597.5 369.1V370.6M599.5 369.1V370.6M604.5 359.2V360.7M607.5 346.5V350.4M608.5 346.1V347.6M609.5 340.0V343.9M610.5 340.0V347.1M612.5 339.5V341.0M616.5 330.1V334.0M617.5 339.5V341.0M619.5 342.8V344.3M625.5 332.9V334.4M629.5 342.8V344.3M636.5 339.5V341.0M637.5 336.7V340.6M638.5 342.8V344.3M640.5 346.1V347.6M643.5 342.8V344.3M645.5 352.7V354.2M647.5 346.1V347.6M649.5 342.8V344.3M650.5 343.3V347.1M655.5 329.7V331.2M656.5 329.7V331.2M660.5 323.1V324.6M661.5 323.1V324.6M662.5 323.1V324.6M664.5 326.4V327.9M665.5 323.1V324.6M666.5 326.4V327.9M667.5 326.4V327.9M668.5 332.9V334.4M670.5 336.7V343.9M672.5 339.5V341.0M675.5 342.8V344.3M677.5 346.5V350.4M680.5 349.4V350.9M859.5 385.5V387.0M862.5 363.0V370.1M865.5 365.8V367.3M868.5 359.2V360.7M870.5 355.9V357.4M871.5 356.4V363.6M872.5 359.2V360.7M875.5 346.1V347.6M876.5 349.4V350.9M882.5 352.7V354.2M889.5 339.5V341.0M893.5 343.3V347.1M894.5 349.4V350.9M899.5 332.9V334.4M901.5 326.4V327.9M903.5 329.7V331.2M905.5 320.3V324.1M907.5 323.1V324.6M915.5 317.0V324.1M929.5 306.7V308.2M932.5 283.7V285.2M933.5 287.0V288.5M957.5 287.0V288.5M964.5 306.7V308.2M967.5 300.1V301.6M972.5 303.8V307.7M974.5 319.8V321.3M980.5 319.8V321.3M982.5 319.8V321.3M985.5 317.0V324.1M987.5 306.7V308.2M990.5 316.5V318.0M995.5 332.9V334.4M999.5 310.0V311.5M1002.5 316.5V318.0M1003.5 313.7V317.6M1008.5 313.2V314.7M1009.5 307.1V314.3M1013.5 326.8V334.0M1014.5 330.1V337.3M1017.5 349.8V357.0" stroke="#dcd46a" stroke-width="1.45" fill="none"/><path d="M17.5 423.4V431.4M20.5 425.8V432.2M25.5 423.4V429.0M67.5 409.1V412.3M76.5 413.1V415.5M136.5 429.0V435.4M140.5 439.3V445.7M156.5 432.2V438.5M162.5 442.5V448.9M163.5 448.9V460.8M166.5 458.4V461.6M172.5 445.7V453.7M173.5 439.3V445.7M177.5 455.3V468.0M688.5 343.5V346.3M706.5 356.8V362.5M707.5 367.2V376.4M708.5 379.9V392.7M710.5 390.3V401.9M711.5 397.3V418.1M715.5 406.6V415.8M722.5 423.9V426.2M723.5 429.7V435.5M724.5 435.5V441.3M725.5 439.0V445.5M742.5 383.4V392.7M764.5 397.3V401.9M790.5 349.8V359.1M798.5 370.7V378.8M802.5 387.6V389.2M840.5 323.2V337.1M845.5 341.7V346.3M846.5 348.6V363.7M847.5 348.6V350.0M850.5 351.0V356.8M852.5 367.2V376.4M855.5 354.4V367.2M856.5 355.6V360.2M859.5 383.4V399.6M1021.5 349.8V366.0M1026.5 337.1V344.0M1035.5 343.5V346.3M1037.5 353.7V359.1M1097.5 356.7V359.7M1099.5 359.7V363.7M1109.5 360.2V367.2M1167.5 376.4V382.2M1175.5 356.7V376.4M1208.5 403.1V406.1M930.5 271.1V294.2M932.5 269.9V288.4M933.5 272.2V290.7M934.5 279.2V294.2M936.5 268.7V283.8M937.5 276.8V297.7M938.5 269.9V286.1M939.5 272.2V288.4M924.5 337.1V353.3M976.5 330.1V344.0M880.5 318.5V348.7M181.5 454.9V458.8M200.5 461.5V465.4M206.5 451.7V455.5M207.5 451.7V455.5M212.5 454.9V458.8M215.5 458.2V465.4M217.5 464.8V472.0M220.5 474.7V481.8M221.5 474.7V481.8M223.5 481.2V491.7M229.5 474.7V478.5M230.5 474.7V481.8M237.5 468.1V475.3M240.5 458.2V462.1M242.5 458.2V462.1M244.5 458.2V468.7M246.5 458.2V462.1M251.5 454.9V458.8M255.5 461.5V472.0M257.5 454.9V462.1M259.5 464.8V472.0M261.5 471.4V475.3M263.5 471.4V475.3M268.5 468.1V478.5M279.5 448.4V452.3M302.5 369.5V373.4M308.5 366.2V373.4M309.5 369.5V376.7M310.5 376.1V380.0M317.5 386.0V393.1M318.5 392.5V403.0M320.5 399.1V406.3M321.5 399.1V403.0M331.5 389.2V396.4M334.5 386.0V399.7M335.5 392.5V396.4M337.5 395.8V399.7M338.5 395.8V403.0M339.5 402.4V406.3M342.5 405.7V409.6M352.5 402.4V406.3M368.5 395.8V399.7M372.5 395.8V406.3M376.5 405.7V409.6M378.5 409.0V412.8M383.5 412.2V416.1M387.5 399.1V403.0M417.5 399.1V403.0M420.5 402.4V406.3M422.5 405.7V409.6M445.5 409.0V412.8M449.5 409.0V412.8M451.5 412.2V416.1M463.5 382.7V386.6M464.5 382.7V386.6M485.5 359.7V366.9M491.5 359.7V366.9M492.5 366.2V370.1M496.5 359.7V363.6M498.5 353.1V363.6M501.5 359.7V363.6M503.5 369.5V373.4M506.5 366.2V370.1M512.5 349.8V353.7M530.5 303.8V314.3M531.5 307.1V314.3M534.5 310.4V314.3M536.5 323.5V327.4M537.5 320.3V330.7M542.5 310.4V317.6M543.5 317.0V327.4M545.5 330.1V337.3M556.5 372.8V380.0M558.5 376.1V383.3M560.5 382.7V386.6M568.5 372.8V380.0M569.5 376.1V383.3M571.5 376.1V380.0M573.5 369.5V380.0M581.5 363.0V366.9M585.5 356.4V360.3M588.5 346.5V353.7M589.5 349.8V353.7M590.5 346.5V357.0M591.5 353.1V363.6M592.5 363.0V366.9M600.5 369.5V380.0M601.5 372.8V386.6M618.5 340.0V343.9M621.5 343.3V347.1M624.5 336.7V340.6M626.5 333.4V337.3M627.5 336.7V340.6M628.5 340.0V347.1M630.5 343.3V347.1M632.5 343.3V347.1M634.5 340.0V347.1M641.5 340.0V350.4M644.5 343.3V347.1M654.5 330.1V337.3M663.5 323.5V327.4M674.5 336.7V350.4M678.5 349.8V353.7M679.5 343.3V353.7M850.5 353.1V360.3M851.5 356.4V370.1M852.5 363.0V373.4M854.5 359.7V363.6M855.5 359.7V373.4M856.5 363.0V373.4M857.5 372.8V380.0M858.5 372.8V383.3M866.5 366.2V370.1M873.5 349.8V357.0M879.5 336.7V347.1M880.5 340.0V357.0M881.5 343.3V350.4M883.5 353.1V357.0M885.5 340.0V343.9M887.5 343.3V347.1M890.5 340.0V350.4M891.5 346.5V357.0M896.5 340.0V343.9M897.5 343.3V347.1M902.5 323.5V337.3M904.5 326.8V330.7M911.5 313.7V317.6M913.5 313.7V320.9M916.5 320.3V324.1M918.5 320.3V324.1M921.5 310.4V320.9M922.5 317.0V324.1M923.5 326.8V340.6M924.5 330.1V347.1M935.5 280.8V284.7M936.5 274.3V291.3M937.5 290.7V294.6M940.5 287.4V297.9M941.5 290.7V304.4M944.5 297.3V301.2M946.5 290.7V301.2M947.5 307.1V320.9M949.5 300.6V314.3M952.5 290.7V297.9M953.5 294.0V297.9M958.5 294.0V307.7M960.5 294.0V297.9M961.5 297.3V304.4M962.5 303.8V307.7M963.5 307.1V314.3M965.5 307.1V311.0M969.5 287.4V291.3M970.5 290.7V294.6M971.5 300.6V311.0M973.5 313.7V320.9M975.5 317.0V327.4M976.5 326.8V340.6M977.5 333.4V347.1M981.5 313.7V320.9M983.5 320.3V324.1M988.5 307.1V311.0M989.5 303.8V317.6M991.5 310.4V327.4M993.5 320.3V327.4M994.5 323.5V340.6M1001.5 307.1V317.6M1005.5 307.1V324.1M1010.5 313.7V320.9M1011.5 317.0V327.4M1015.5 323.5V340.6M1016.5 340.0V350.4M1018.5 349.8V366.9M1019.5 359.7V366.9M1020.5 366.2V373.4" stroke="#1585f0" stroke-width="1.45" fill="none"/><path d="M8.5 416.3V422.6M12.5 413.1V420.2M23.5 422.6V431.4M24.5 418.6V426.6M42.5 441.7V448.1M45.5 436.2V438.5M63.5 409.1V413.1M113.5 425.8V438.5M116.5 439.3V445.7M161.5 439.3V448.1M168.5 458.4V471.2M169.5 448.9V460.0M171.5 442.5V453.7M179.5 460.0V471.2M685.5 347.5V349.1M702.5 344.0V346.3M713.5 401.9V418.1M718.5 415.8V420.5M730.5 422.8V441.3M733.5 413.5V422.8M735.5 413.0V414.7M738.5 408.9V412.3M739.5 403.1V405.4M740.5 396.1V399.6M743.5 385.7V392.7M745.5 383.4V391.5M749.5 390.3V395.0M768.5 391.5V392.8M772.5 386.9V389.2M780.5 360.2V369.5M783.5 354.4V356.8M785.5 337.1V342.9M786.5 345.2V349.8M787.5 341.7V348.6M806.5 392.7V395.4M819.5 360.2V378.8M821.5 347.5V354.4M835.5 360.2V369.5M837.5 341.7V353.3M839.5 320.8V334.7M841.5 330.1V340.5M843.5 331.3V334.7M853.5 366.0V371.8M1033.5 333.6V340.5M1040.5 346.3V353.7M1047.5 346.3V356.7M1070.5 344.0V356.7M931.5 276.8V290.7M940.5 279.2V286.1M955.5 267.6V285.0M956.5 268.7V283.8M978.5 330.1V348.7M878.5 318.5V364.9M180.5 454.9V468.7M182.5 448.4V458.8M190.5 454.9V458.8M191.5 454.9V458.8M192.5 448.4V458.8M196.5 451.7V455.5M199.5 454.9V465.4M201.5 458.2V462.1M202.5 451.7V455.5M203.5 454.9V458.8M205.5 451.7V455.5M224.5 477.9V481.8M234.5 471.4V475.3M238.5 468.1V475.3M239.5 458.2V468.7M245.5 458.2V475.3M249.5 454.9V465.4M250.5 454.9V462.1M252.5 451.7V455.5M256.5 461.5V465.4M258.5 464.8V468.7M267.5 468.1V475.3M272.5 474.7V481.8M273.5 464.8V475.3M274.5 458.2V465.4M275.5 454.9V458.8M278.5 451.7V458.8M280.5 445.1V452.3M281.5 435.2V445.7M282.5 431.9V439.1M284.5 415.5V422.7M285.5 415.5V422.7M286.5 409.0V419.4M287.5 399.1V409.6M288.5 399.1V403.0M289.5 395.8V406.3M292.5 399.1V403.0M295.5 395.8V399.7M296.5 386.0V396.4M297.5 376.1V393.1M300.5 376.1V386.6M301.5 372.8V380.0M304.5 366.2V373.4M319.5 399.1V403.0M325.5 389.2V396.4M328.5 386.0V393.1M332.5 382.7V393.1M336.5 395.8V399.7M351.5 395.8V403.0M360.5 405.7V409.6M385.5 402.4V406.3M394.5 402.4V406.3M397.5 402.4V406.3M415.5 402.4V406.3M434.5 412.2V416.1M446.5 409.0V416.1M459.5 395.8V403.0M460.5 382.7V389.8M479.5 376.1V386.6M480.5 366.2V373.4M483.5 363.0V373.4M484.5 356.4V366.9M490.5 366.2V370.1M493.5 366.2V370.1M495.5 359.7V373.4M500.5 359.7V366.9M504.5 363.0V370.1M505.5 363.0V370.1M508.5 359.7V376.7M509.5 353.1V360.3M518.5 336.7V340.6M520.5 330.1V334.0M521.5 326.8V330.7M522.5 320.3V327.4M523.5 323.5V327.4M524.5 317.0V324.1M526.5 310.4V324.1M527.5 303.8V311.0M538.5 320.3V330.7M539.5 320.3V324.1M540.5 310.4V320.9M546.5 333.4V337.3M549.5 336.7V343.9M555.5 372.8V380.0M557.5 376.1V383.3M562.5 382.7V386.6M563.5 376.1V383.3M564.5 369.5V376.7M565.5 363.0V370.1M570.5 372.8V376.7M572.5 376.1V386.6M576.5 369.5V376.7M578.5 366.2V370.1M582.5 363.0V366.9M583.5 359.7V363.6M584.5 356.4V360.3M587.5 346.5V353.7M598.5 369.5V373.4M602.5 359.7V373.4M603.5 356.4V366.9M605.5 356.4V360.3M606.5 349.8V357.0M611.5 340.0V343.9M613.5 340.0V347.1M614.5 333.4V340.6M615.5 333.4V337.3M620.5 343.3V347.1M622.5 340.0V347.1M623.5 336.7V343.9M631.5 343.3V347.1M633.5 343.3V347.1M635.5 336.7V347.1M639.5 346.5V350.4M642.5 346.5V350.4M646.5 349.8V353.7M648.5 343.3V347.1M651.5 340.0V347.1M652.5 340.0V347.1M653.5 330.1V340.6M657.5 326.8V330.7M658.5 310.4V327.4M659.5 313.7V317.6M669.5 333.4V337.3M671.5 340.0V343.9M673.5 336.7V340.6M676.5 340.0V347.1M853.5 359.7V366.9M860.5 379.4V386.6M861.5 376.1V380.0M863.5 359.7V370.1M864.5 363.0V370.1M867.5 356.4V373.4M869.5 353.1V360.3M874.5 346.5V353.7M877.5 340.0V343.9M878.5 330.1V343.9M884.5 336.7V347.1M886.5 333.4V343.9M888.5 336.7V343.9M892.5 353.1V357.0M895.5 343.3V353.7M898.5 333.4V340.6M900.5 326.8V334.0M906.5 317.0V324.1M908.5 320.3V330.7M909.5 310.4V320.9M910.5 313.7V317.6M912.5 310.4V324.1M914.5 313.7V320.9M917.5 317.0V324.1M919.5 317.0V327.4M920.5 307.1V317.6M925.5 330.1V337.3M926.5 320.3V330.7M927.5 310.4V320.9M928.5 307.1V311.0M930.5 290.7V297.9M931.5 284.1V291.3M934.5 280.8V288.0M938.5 277.6V291.3M939.5 280.8V288.0M942.5 300.6V311.0M943.5 294.0V307.7M945.5 284.1V297.9M948.5 303.8V311.0M950.5 300.6V311.0M951.5 297.3V304.4M954.5 287.4V297.9M955.5 284.1V294.6M956.5 280.8V288.0M959.5 294.0V301.2M966.5 300.6V317.6M968.5 290.7V301.2M978.5 336.7V340.6M979.5 326.8V343.9M984.5 313.7V330.7M986.5 300.6V317.6M992.5 320.3V327.4M996.5 320.3V334.0M997.5 320.3V327.4M998.5 310.4V324.1M1000.5 307.1V311.0M1004.5 300.6V324.1M1006.5 307.1V317.6M1007.5 303.8V314.3M1012.5 317.0V324.1" stroke="#ff1010" stroke-width="1.45" fill="none"/>
<g font-family="'Liberation Sans','Noto Sans CJK JP',sans-serif" font-size="12" fill="#cacaca">
<text x="48.3" y="513.7" textLength="12.4" lengthAdjust="spacingAndGlyphs">03</text>
<text x="92.1" y="513.7" textLength="12.4" lengthAdjust="spacingAndGlyphs">04</text>
<text x="129.3" y="513.7" textLength="12.4" lengthAdjust="spacingAndGlyphs">05</text>
<text x="144.9" y="513.7" textLength="12.4" lengthAdjust="spacingAndGlyphs" font-weight="bold">06</text>
<text x="178.3" y="513.7" textLength="12.4" lengthAdjust="spacingAndGlyphs">09</text>
<text x="239.1" y="513.7" textLength="12.4" lengthAdjust="spacingAndGlyphs">10</text>
<text x="301.1" y="513.7" textLength="12.4" lengthAdjust="spacingAndGlyphs">11</text>
<text x="362.1" y="513.7" textLength="12.4" lengthAdjust="spacingAndGlyphs">12</text>
<text x="421.1" y="513.7" textLength="12.4" lengthAdjust="spacingAndGlyphs">13</text>
<text x="479.9" y="513.7" textLength="12.4" lengthAdjust="spacingAndGlyphs">14</text>
<text x="525.7" y="513.7" textLength="12.4" lengthAdjust="spacingAndGlyphs">15</text>
<text x="551.8" y="513.7" textLength="12.4" lengthAdjust="spacingAndGlyphs">16</text>
<text x="583.1" y="513.7" textLength="12.4" lengthAdjust="spacingAndGlyphs">17</text>
<text x="640.9" y="513.7" textLength="12.4" lengthAdjust="spacingAndGlyphs">18</text>
<text x="701.8" y="513.7" textLength="12.4" lengthAdjust="spacingAndGlyphs">19</text>
<text x="759.8" y="513.7" textLength="12.4" lengthAdjust="spacingAndGlyphs">20</text>
<text x="818.8" y="513.7" textLength="12.4" lengthAdjust="spacingAndGlyphs">21</text>
<text x="879.7" y="513.7" textLength="12.4" lengthAdjust="spacingAndGlyphs">22</text>
<text x="940.8" y="513.7" textLength="12.4" lengthAdjust="spacingAndGlyphs">23</text>
<text x="1003" y="513.7" textLength="12.4" lengthAdjust="spacingAndGlyphs">00</text>
<text x="1060.8" y="513.7" textLength="12.4" lengthAdjust="spacingAndGlyphs">01</text>
<text x="1110.1" y="513.7" textLength="12.4" lengthAdjust="spacingAndGlyphs">02</text>
<text x="1149.1" y="513.7" textLength="12.4" lengthAdjust="spacingAndGlyphs">03</text>
<text x="1177" y="513.7" textLength="12.4" lengthAdjust="spacingAndGlyphs">04</text>
<text x="1206.9" y="513.7" textLength="12.4" lengthAdjust="spacingAndGlyphs">05</text>
<text x="1214.3" y="513.7" textLength="12.4" lengthAdjust="spacingAndGlyphs">06</text>
<text x="1003.5" y="498.3" textLength="12.4" lengthAdjust="spacingAndGlyphs">13</text>
<text x="1237.3" y="265.7" textLength="30.9" lengthAdjust="spacingAndGlyphs">3,690</text>
<text x="1237.3" y="298.55" textLength="30.9" lengthAdjust="spacingAndGlyphs">3,680</text>
<text x="1237.3" y="331.4" textLength="30.9" lengthAdjust="spacingAndGlyphs">3,670</text>
<text x="1237.3" y="364.25" textLength="30.9" lengthAdjust="spacingAndGlyphs">3,660</text>
<text x="1237.3" y="397.1" textLength="30.9" lengthAdjust="spacingAndGlyphs">3,650</text>
<text x="1237.3" y="429.95" textLength="30.9" lengthAdjust="spacingAndGlyphs">3,640</text>
<text x="1237.3" y="462.8" textLength="30.9" lengthAdjust="spacingAndGlyphs">3,630</text>
<text x="1237.3" y="495.65" textLength="30.9" lengthAdjust="spacingAndGlyphs">3,620</text>
<text x="7.6" y="268.3" fill="#e0e0e0" textLength="334" lengthAdjust="spacingAndGlyphs">時刻:06:00 始値:3,646 高値:3,646 安値:3,646 終値:3,646</text>
</g>
<rect x="1235.6000000000001" y="402.3" width="59.899999999999906" height="21.2" fill="#d3d3d3"/><text x="1249.3" y="415.6" font-family="'Liberation Sans',sans-serif" font-size="12" font-weight="bold" fill="#000" textLength="30.9" lengthAdjust="spacingAndGlyphs">3,646</text><rect x="6" y="524.6" width="1289.5" height="160.39999999999998" fill="#1b1b1b"/><rect x="6" y="524.6" width="1229.4" height="144.39999999999998" fill="#000"/><path d="M7 540.5H1235.4M7 599.5H1235.4M7 657.5H1235.4" stroke="#b4b4b4" stroke-width="1" stroke-dasharray="1 1" fill="none"/><path d="M47.5 525V669M91.3 525V669M128.3 525V669M177.5 525V669M238.3 525V669M300.3 525V669M361.3 525V669M420.3 525V669M479.1 525V669M540.3 525V669M551.0 525V669M582.3 525V669M640.1 525V669M701.0 525V669M759.0 525V669M818.0 525V669M878.9 525V669M940.0 525V669M1002.2 525V669M1060.0 525V669M1109.3 525V669M1148.3 525V669M1176.2 525V669M1206.1 525V669M1230.1 525V669" stroke="#545454" stroke-width="1" fill="none"/><path d="M47.5 525V669M91.3 525V669M128.3 525V669M177.5 525V669M238.3 525V669M300.3 525V669M361.3 525V669M420.3 525V669M479.1 525V669M540.3 525V669M551.0 525V669M582.3 525V669M640.1 525V669M701.0 525V669M759.0 525V669M818.0 525V669M878.9 525V669M940.0 525V669M1002.2 525V669M1060.0 525V669M1109.3 525V669M1148.3 525V669M1176.2 525V669M1206.1 525V669M1230.1 525V669" stroke="#949494" stroke-width="1" stroke-dasharray="1 1" fill="none"/><path d="M161 525V669" stroke="#5c5c5c" stroke-width="2" fill="none"/><path d="M161 525V669" stroke="#a4a4a4" stroke-width="2" stroke-dasharray="1 1" fill="none"/><path d="M6.5 523.6V669.5" stroke="#ececec" stroke-width="1.4" fill="none"/><path d="M6 669.5H1236.4" stroke="#e4e4e4" stroke-width="1.2" fill="none"/><path d="M1235.9 670.1V524.6" stroke="#c4c4c4" stroke-width="1.6" fill="none"/><path d="M6 524.0H1236.4" stroke="#c8c8c8" stroke-width="1.3" fill="none"/><path d="M8 601.3L9 606.0L10 610.7L11 613.0L12 615.4L13 615.4L14 617.7L15 620.1L16 617.7L17 620.1L18 622.0L19 617.7L20 613.0L21 610.7L22 606.0L23 605.8L24 617.7L25 615.4L26 615.4L27 615.4L28 618.4L29 617.7L30 615.4L31 615.4L32 615.4L33 615.4L34 615.4L35 615.4L36 613.0L37 617.7L38 613.0L39 613.0L40 610.7L41 610.0L42 610.7L43 613.0L44 617.7L45 615.4L46 617.7L47 617.7L48 622.4L49 623.7L50 622.4L51 620.1L52 617.7L53 616.3L54 623.7L55 620.1L56 620.1L57 615.7L58 617.7L59 617.7L60 620.1L61 617.7L62 622.4L63 622.4L64 624.7L65 627.1L66 629.4L67 629.4L68 631.8L69 629.4L70 629.4L71 624.7L72 627.1L73 627.1L74 624.7L75 627.1L76 627.1L77 627.1L78 628.9L79 624.7L80 624.7L81 624.7L82 624.7L83 624.7L84 617.7L85 615.4L86 615.4L87 615.4L88 615.4L89 613.0L90 610.7L91 613.0L92 610.7L93 610.7L94 610.7L95 610.7L96 615.4L97 615.4L98 614.2L99 613.0L100 610.7L101 608.4L102 606.0L103 603.7L104 603.7L105 603.7L106 606.0L107 606.0L108 603.7L109 603.7L110 603.7L111 601.3L112 599.0L113 601.3L114 603.7L115 610.0L116 608.4L117 601.3L118 598.9L119 606.0L120 606.0L121 606.0L122 610.7L123 610.7L124 608.4L125 606.0L126 604.8L127 606.0L128 609.0L129 608.4L130 608.4L131 608.4L132 606.0L133 608.4L134 603.7L135 603.7L136 606.0L137 608.4L138 608.4L139 610.7L140 611.5L141 608.4L142 606.0L143 605.8L144 610.7L145 610.7L146 610.7L147 608.4L148 610.7L149 610.7L150 613.0L151 613.0L152 613.0L153 613.0L154 615.4L155 622.4L156 623.7L157 622.4L158 620.1L159 617.7L160 620.1L161 617.7L162 617.7L163 610.7L164 603.7L165 599.0L166 601.3L167 599.0L168 599.0L169 601.3L170 601.3L171 613.0L172 615.4L173 615.4L174 613.0L175 608.4L176 608.4L177 606.0L178 603.7L179 599.0L180 597.4L181 601.3L182 606.0L183 606.0L184 606.0L185 610.0L186 608.4L187 603.7L188 601.3L189 598.9L190 599.0L191 603.7L192 606.0L193 608.4L194 610.7L195 618.4L196 613.0L197 608.4L198 608.4L199 608.4L200 608.4L201 613.0L202 614.2L203 613.0L204 610.7L205 606.0L206 606.0L207 606.0L208 606.0L209 606.0L210 606.0L211 608.4L212 608.4L213 608.4L214 608.4L215 610.7L216 606.0L217 601.3L218 601.3L219 599.0L220 596.7L221 601.3L222 596.7L223 596.7L224 594.3L225 592.0L226 592.0L227 589.6L228 592.0L229 592.0L230 592.0L231 589.6L232 588.0L233 592.0L234 594.3L235 594.3L236 596.7L237 596.7L238 596.7L239 601.3L240 606.9L241 606.0L242 601.3L243 601.3L244 596.7L245 596.7L246 585.9L247 594.3L248 596.4L249 592.0L250 589.6L251 585.0L252 585.0L253 582.7L254 582.6L255 582.6L256 585.0L257 585.9L258 585.0L259 585.0L260 582.6L261 582.6L262 582.6L263 580.3L264 580.3L265 582.6L266 582.6L267 580.3L268 580.3L269 577.9L270 580.3L271 577.9L272 580.3L273 573.3L274 569.1L275 587.3L276 589.6L277 592.0L278 592.0L279 594.3L280 594.3L281 594.3L282 596.7L283 599.0L284 603.7L285 606.0L286 610.7L287 615.4L288 617.7L289 617.7L290 622.4L291 620.1L292 622.4L293 622.4L294 620.1L295 620.1L296 622.4L297 624.7L298 629.4L299 629.4L300 634.1L301 634.1L302 636.4L303 638.8L304 641.1L305 643.5L306 643.5L307 645.8L308 645.8L309 648.1L310 645.8L311 634.1L312 629.4L313 631.8L314 631.8L315 631.8L316 629.4L317 627.1L318 624.7L319 620.1L320 615.4L321 615.4L322 615.4L323 613.2L324 615.4L325 622.6L326 620.1L327 616.3L328 617.7L329 622.4L330 624.7L331 625.3L332 622.4L333 622.4L334 620.1L335 617.7L336 617.7L337 615.4L338 615.4L339 610.7L340 608.4L341 608.4L342 606.0L343 608.4L344 608.4L345 608.4L346 610.7L347 608.4L348 610.7L349 610.7L350 610.7L351 608.4L352 610.7L353 610.7L354 610.7L355 608.4L356 608.4L357 608.4L358 606.0L359 606.0L360 606.0L361 605.8L362 608.4L363 608.4L364 608.4L365 615.4L366 617.7L367 622.4L368 622.4L369 622.4L370 620.1L371 617.7L372 620.1L373 616.3L374 617.7L375 620.1L376 622.4L377 622.4L378 622.4L379 620.1L380 620.1L381 620.1L382 617.7L383 613.2L384 615.4L385 617.7L386 620.1L387 622.4L388 625.8L389 624.7L390 622.4L391 617.7L392 617.7L393 620.1L394 620.1L395 617.7L396 617.7L397 615.4L398 615.4L399 615.4L400 613.0L401 613.0L402 613.0L403 615.4L404 613.0L405 615.4L406 615.4L407 617.7L408 615.4L409 615.4L410 615.4L411 610.7L412 610.7L413 608.4L414 608.4L415 606.0L416 608.4L417 608.4L418 608.4L419 613.0L420 613.0L421 613.0L422 608.4L423 606.0L424 603.7L425 606.0L426 603.7L427 603.7L428 603.7L429 603.7L430 606.0L431 603.7L432 601.3L433 606.0L434 606.0L435 606.0L436 606.0L437 608.5L438 608.4L439 604.8L440 606.0L441 608.4L442 610.7L443 615.4L444 617.7L445 617.7L446 620.1L447 622.4L448 623.7L449 620.1L450 617.7L451 615.4L452 615.4L453 615.4L454 615.4L455 610.7L456 613.0L457 613.0L458 615.4L459 613.0L460 610.7L461 620.1L462 624.7L463 632.5L464 629.4L465 629.4L466 627.1L467 624.7L468 624.7L469 627.1L470 631.8L471 631.8L472 629.4L473 629.4L474 629.4L475 629.4L476 627.1L477 624.7L478 624.7L479 622.0L480 627.1L481 629.4L482 631.8L483 634.1L484 634.1L485 636.4L486 640.0L487 636.4L488 634.1L489 634.1L490 629.4L491 624.7L492 622.6L493 622.4L494 627.1L495 624.7L496 627.1L497 627.1L498 629.4L499 629.4L500 629.4L501 627.1L502 624.7L503 624.7L504 624.7L505 622.4L506 620.5L507 620.1L508 622.4L509 627.1L510 624.7L511 624.7L512 624.7L513 622.4L514 617.7L515 615.4L516 613.2L517 615.4L518 617.7L519 620.1L520 629.4L521 629.4L522 627.1L523 629.4L524 638.8L525 641.1L526 643.5L527 643.5L528 648.1L529 652.8L530 657.5L531 661.4L532 652.8L533 650.5L534 652.8L535 648.1L536 643.5L537 638.8L538 636.4L539 634.2L540 634.1L541 636.4L542 643.5L543 645.8L544 648.8L545 643.5L546 638.8L547 638.8L548 638.8L549 636.4L550 636.4L551 634.2L552 639.4L553 613.0L554 613.0L555 620.1L556 624.7L557 627.1L558 630.0L559 627.1L560 624.7L561 624.7L562 622.4L563 624.7L564 629.4L565 634.1L566 638.8L567 648.1L568 645.8L569 636.4L570 629.4L571 625.3L572 629.4L573 631.8L574 629.4L575 631.8L576 634.1L577 636.4L578 636.4L579 643.5L580 648.1L581 649.9L582 642.5L583 645.8L584 645.8L585 648.1L586 648.1L587 648.1L588 648.1L589 648.1L590 645.8L591 645.8L592 641.1L593 641.1L594 638.8L595 636.4L596 634.2L597 634.1L598 636.4L599 636.4L600 641.1L601 638.8L602 638.8L603 641.1L604 645.8L605 648.1L606 650.5L607 652.8L608 657.5L609 657.5L610 652.8L611 646.7L612 648.1L613 650.5L614 650.5L615 650.5L616 652.8L617 655.2L618 655.2L619 650.5L620 652.8L621 650.5L622 650.5L623 650.5L624 645.8L625 645.7L626 648.1L627 651.4L628 650.5L629 643.5L630 638.8L631 638.8L632 638.8L633 641.1L634 638.8L635 641.1L636 638.8L637 638.8L638 641.1L639 643.5L640 643.6L641 641.1L642 641.1L643 641.1L644 641.1L645 641.1L646 638.8L647 636.4L648 634.1L649 631.8L650 632.1L651 637.3L652 636.4L653 631.8L654 630.0L655 634.1L656 636.4L657 638.8L658 638.8L659 638.8L660 641.1L661 645.8L662 650.9L663 648.1L664 645.8L665 643.5L666 641.1L667 638.8L668 636.4L669 634.1L670 630.0L671 631.8L672 634.1L673 634.1L674 631.8L675 634.1L676 634.1L677 636.4L678 634.1L679 631.8L680 634.1L681 624.7L682 624.7L683 622.4L684 622.4L685 620.1L686 622.4L687 624.7L688 629.4L689 627.1L690 630.0L691 629.4L692 625.8L693 629.4L694 629.4L695 631.8L696 631.8L697 634.1L698 634.1L699 631.8L700 636.4L701 634.1L702 634.1L703 634.1L704 637.3L705 634.1L706 629.4L707 627.1L708 624.7L709 620.1L710 610.7L711 599.0L712 596.7L713 589.6L714 589.0L715 592.0L716 595.3L717 594.3L718 587.3L719 585.0L720 587.3L721 587.3L722 587.3L723 585.0L724 577.9L725 573.3L726 568.0L727 570.9L728 568.6L729 572.2L730 568.6L731 567.0L732 573.3L733 573.3L734 573.3L735 573.3L736 573.3L737 573.3L738 577.9L739 575.6L740 577.9L741 575.6L742 580.3L743 582.6L744 587.3L745 585.0L746 589.6L747 589.6L748 585.0L749 582.6L750 580.3L751 577.9L752 575.6L753 575.6L754 575.6L755 573.3L756 577.9L757 580.3L758 580.3L759 580.3L760 577.9L761 577.9L762 575.6L763 570.9L764 570.9L765 568.6L766 568.6L767 568.6L768 573.3L769 575.6L770 578.5L771 575.6L772 575.4L773 575.6L774 577.9L775 580.3L776 580.3L777 580.3L778 577.9L779 580.3L780 582.6L781 587.3L782 594.3L783 597.4L784 594.3L785 594.3L786 594.3L787 592.0L788 594.3L789 596.7L790 596.7L791 597.4L792 592.0L793 591.1L794 592.0L795 594.3L796 596.7L797 594.3L798 592.0L799 587.3L800 585.0L801 585.0L802 582.6L803 585.0L804 582.6L805 585.0L806 586.9L807 585.0L808 582.6L809 585.0L810 582.6L811 580.3L812 582.6L813 580.3L814 577.9L815 577.9L816 575.6L817 573.3L818 573.3L819 573.3L820 575.6L821 587.3L822 596.7L823 603.7L824 606.0L825 603.7L826 603.7L827 601.3L828 601.3L829 596.7L830 596.7L831 596.7L832 594.3L833 589.6L834 587.3L835 582.6L836 580.3L837 578.5L838 582.6L839 587.3L840 608.4L841 613.0L842 620.1L843 622.4L844 622.4L845 627.1L846 630.0L847 620.1L848 609.0L849 617.7L850 628.9L851 627.1L852 617.7L853 608.4L854 602.7L855 610.7L856 614.2L857 606.0L858 599.0L859 596.7L860 596.7L861 594.3L862 596.7L863 599.0L864 601.6L865 599.0L866 597.4L867 601.3L868 608.4L869 606.0L870 606.0L871 606.0L872 607.9L873 601.3L874 596.7L875 599.0L876 596.7L877 595.3L878 599.0L879 606.0L880 623.7L881 617.7L882 603.7L883 590.1L884 606.9L885 603.7L886 599.0L887 594.3L888 592.0L889 587.3L890 587.3L891 587.3L892 582.6L893 573.3L894 571.2L895 577.9L896 585.0L897 585.0L898 587.3L899 587.3L900 592.0L901 594.3L902 599.0L903 601.3L904 603.7L905 601.3L906 599.0L907 599.0L908 599.0L909 601.3L910 606.0L911 613.0L912 617.7L913 622.4L914 633.1L915 629.4L916 622.4L917 613.0L918 610.7L919 610.0L920 613.0L921 613.0L922 615.4L923 618.4L924 615.4L925 610.7L926 596.7L927 587.3L928 585.0L929 582.6L930 577.9L931 571.2L932 582.6L933 593.2L934 589.6L935 587.3L936 582.6L937 580.3L938 577.5L939 585.0L940 587.3L941 587.3L942 582.6L943 577.9L944 575.6L945 575.6L946 575.6L947 575.6L948 573.3L949 573.3L950 573.3L951 575.6L952 571.2L953 577.9L954 587.3L955 589.6L956 592.0L957 596.7L958 604.8L959 594.3L960 587.3L961 580.3L962 575.6L963 563.9L964 559.2L965 556.9L966 556.9L967 554.5L968 552.3L969 559.2L970 563.9L971 568.6L972 569.1L973 563.9L974 560.7L975 563.9L976 570.9L977 568.6L978 570.9L979 573.3L980 577.9L981 582.7L982 577.9L983 575.6L984 575.6L985 573.3L986 573.3L987 575.6L988 575.6L989 577.9L990 575.6L991 575.6L992 575.6L993 577.9L994 577.9L995 582.6L996 582.6L997 587.3L998 589.6L999 594.3L1000 596.7L1001 597.4L1002 588.0L1003 592.0L1004 596.4L1005 594.3L1006 591.1L1007 594.3L1008 600.6L1009 594.3L1010 589.6L1011 587.3L1012 582.6L1013 577.9L1014 577.9L1015 580.3L1016 583.8L1017 575.6L1018 566.2L1019 563.9L1020 560.7L1021 563.9L1022 565.9L1023 563.9L1024 560.7L1025 561.6L1026 566.2L1027 566.2L1028 566.2L1029 566.2L1030 566.2L1031 563.9L1032 559.6L1033 561.6L1034 563.9L1035 568.6L1036 572.2L1037 570.9L1038 569.1L1039 573.3L1040 575.6L1041 580.3L1042 580.3L1043 582.6L1044 585.0L1045 582.6L1046 582.6L1047 580.3L1048 580.3L1049 580.3L1050 579.6L1051 585.9L1052 582.6L1053 582.7L1054 585.0L1055 587.3L1056 588.0L1057 585.0L1058 581.7L1059 585.0L1060 590.1L1061 589.6L1062 587.3L1063 585.0L1064 585.0L1065 582.6L1066 587.3L1067 589.6L1068 592.0L1069 592.0L1070 594.3L1071 592.0L1072 592.0L1073 594.3L1074 596.7L1075 594.3L1076 596.7L1077 596.7L1078 596.7L1079 599.0L1080 599.0L1081 596.7L1082 599.0L1083 594.3L1084 594.3L1085 594.3L1086 594.3L1087 592.0L1088 601.3L1089 603.7L1090 603.7L1091 603.7L1092 596.7L1093 589.6L1094 589.6L1095 587.3L1096 589.6L1097 587.3L1098 587.3L1099 587.3L1100 585.0L1101 582.6L1102 582.6L1103 580.3L1104 577.9L1105 577.9L1106 575.6L1107 575.6L1108 575.6L1109 575.6L1110 573.3L1111 573.3L1112 580.3L1113 585.9L1114 585.0L1115 582.6L1116 582.6L1117 582.6L1118 585.0L1119 582.6L1120 582.6L1121 585.0L1122 587.3L1123 587.3L1124 587.3L1125 589.6L1126 589.6L1127 590.5L1128 589.6L1129 587.3L1130 587.3L1131 589.6L1132 587.3L1133 585.0L1134 582.6L1135 582.6L1136 582.6L1137 582.6L1138 582.6L1139 582.6L1140 582.6L1141 580.3L1142 580.3L1143 582.6L1144 577.9L1145 582.6L1146 580.3L1147 580.3L1148 580.3L1149 580.3L1150 580.3L1151 582.6L1152 582.6L1153 582.6L1154 580.3L1155 580.3L1156 580.3L1157 580.3L1158 582.6L1159 582.6L1160 582.6L1161 585.0L1162 585.0L1163 585.0L1164 585.0L1165 587.3L1166 587.3L1167 582.6L1168 580.3L1169 577.9L1170 575.6L1171 575.6L1172 573.3L1173 570.9L1174 569.1L1175 577.9L1176 581.7L1177 573.3L1178 573.3L1179 573.3L1180 573.3L1181 573.3L1182 570.9L1183 573.3L1184 573.3L1185 575.6L1186 575.6L1187 566.2L1188 557.5L1189 559.2L1190 561.6L1191 561.6L1192 563.9L1193 566.2L1194 566.2L1195 569.1L1196 563.9L1197 556.9L1198 556.9L1199 559.2L1200 559.2L1201 556.9L1202 554.5L1203 552.2L1204 549.9L1205 549.9L1206 552.2L1207 563.8L1208 563.9L1209 561.6L1210 559.2L1211 547.5L1212 545.2L1213 542.8L1214 542.8L1215 542.8L1216 540.5L1217 533.5L1218 531.1L1219 533.5L1220 533.5L1221 533.5L1222 538.2L1223 542.8L1224 549.9L1225 554.5L1226 552.2L1227 552.2L1228 552.2L1229 547.5L1230 545.2L1231 545.2L1232 545.2" stroke="#ff0000" stroke-width="1.9" fill="none" stroke-linejoin="miter"/>
<g font-family="'Liberation Sans','Noto Sans CJK JP',sans-serif" font-size="12" fill="#cacaca">
<text x="48.3" y="679.5" textLength="12.4" lengthAdjust="spacingAndGlyphs">03</text>
<text x="92.1" y="679.5" textLength="12.4" lengthAdjust="spacingAndGlyphs">04</text>
<text x="129.3" y="679.5" textLength="12.4" lengthAdjust="spacingAndGlyphs">05</text>
<text x="144.9" y="679.5" textLength="12.4" lengthAdjust="spacingAndGlyphs" font-weight="bold">06</text>
<text x="178.3" y="679.5" textLength="12.4" lengthAdjust="spacingAndGlyphs">09</text>
<text x="239.1" y="679.5" textLength="12.4" lengthAdjust="spacingAndGlyphs">10</text>
<text x="301.1" y="679.5" textLength="12.4" lengthAdjust="spacingAndGlyphs">11</text>
<text x="362.1" y="679.5" textLength="12.4" lengthAdjust="spacingAndGlyphs">12</text>
<text x="421.1" y="679.5" textLength="12.4" lengthAdjust="spacingAndGlyphs">13</text>
<text x="479.9" y="679.5" textLength="12.4" lengthAdjust="spacingAndGlyphs">14</text>
<text x="525.7" y="679.5" textLength="12.4" lengthAdjust="spacingAndGlyphs">15</text>
<text x="551.8" y="679.5" textLength="12.4" lengthAdjust="spacingAndGlyphs">16</text>
<text x="583.1" y="679.5" textLength="12.4" lengthAdjust="spacingAndGlyphs">17</text>
<text x="640.9" y="679.5" textLength="12.4" lengthAdjust="spacingAndGlyphs">18</text>
<text x="701.8" y="679.5" textLength="12.4" lengthAdjust="spacingAndGlyphs">19</text>
<text x="759.8" y="679.5" textLength="12.4" lengthAdjust="spacingAndGlyphs">20</text>
<text x="818.8" y="679.5" textLength="12.4" lengthAdjust="spacingAndGlyphs">21</text>
<text x="879.7" y="679.5" textLength="12.4" lengthAdjust="spacingAndGlyphs">22</text>
<text x="940.8" y="679.5" textLength="12.4" lengthAdjust="spacingAndGlyphs">23</text>
<text x="1003" y="679.5" textLength="12.4" lengthAdjust="spacingAndGlyphs">00</text>
<text x="1060.8" y="679.5" textLength="12.4" lengthAdjust="spacingAndGlyphs">01</text>
<text x="1110.1" y="679.5" textLength="12.4" lengthAdjust="spacingAndGlyphs">02</text>
<text x="1149.1" y="679.5" textLength="12.4" lengthAdjust="spacingAndGlyphs">03</text>
<text x="1177" y="679.5" textLength="12.4" lengthAdjust="spacingAndGlyphs">04</text>
<text x="1206.9" y="679.5" textLength="12.4" lengthAdjust="spacingAndGlyphs">05</text>
<text x="1214.3" y="679.5" textLength="12.4" lengthAdjust="spacingAndGlyphs">06</text>
<text x="1003.5" y="664.1" textLength="12.4" lengthAdjust="spacingAndGlyphs">13</text>
<text x="1237.3" y="538.1" textLength="30.9" lengthAdjust="spacingAndGlyphs">2,775</text>
<text x="1237.3" y="596.7" textLength="30.9" lengthAdjust="spacingAndGlyphs">2,750</text>
<text x="1237.3" y="655" textLength="30.9" lengthAdjust="spacingAndGlyphs">2,725</text>
<text x="7.6" y="536.5" fill="#e0e0e0" textLength="432.9" lengthAdjust="spacingAndGlyphs">[金 22/08 6,420×1.00]－[白金 22/08 3,646×1.00] 終値 時刻:06:00 2,774</text>
</g>
<rect x="1235.6000000000001" y="532.9" width="59.899999999999906" height="21.2" fill="#d3d3d3"/><text x="1249.3" y="546.2" font-family="'Liberation Sans',sans-serif" font-size="12" font-weight="bold" fill="#000" textLength="30.9" lengthAdjust="spacingAndGlyphs">2,774</text><rect x="6" y="250.8" width="1289.5" height="3.4" fill="#fff"/><rect x="6" y="254.20000000000002" width="1289.5" height="1" fill="#9a9a9a"/><rect x="6" y="519.3" width="1289.5" height="3.4" fill="#fff"/><rect x="6" y="522.6999999999999" width="1289.5" height="1" fill="#9a9a9a"/>
<text x="30" y="15" font-family="'Liberation Sans','Noto Sans CJK JP',sans-serif" font-size="11.8" fill="#000" textLength="250.7" lengthAdjust="spacingAndGlyphs">金1分足[2022/08]1.00 - 白金1分足[2022/08]1.00</text><text x="11.7" y="38.2" font-family="'Liberation Sans','Noto Sans CJK JP',sans-serif" font-size="11.3" fill="#14141e">金</text><text x="34.4" y="38.4" font-family="Liberation Sans, sans-serif" font-size="11.2" fill="#14141e" textLength="40.6" lengthAdjust="spacingAndGlyphs">2022/08</text><text x="143" y="38.2" font-family="'Liberation Sans','Noto Sans CJK JP',sans-serif" font-size="11.3" fill="#14141e" textLength="22.6" lengthAdjust="spacingAndGlyphs">白金</text><text x="177.6" y="38.4" font-family="Liberation Sans, sans-serif" font-size="11.2" fill="#14141e" textLength="40.4" lengthAdjust="spacingAndGlyphs">2022/08</text><text x="285" y="38.2" font-family="'Liberation Sans','Noto Sans CJK JP',sans-serif" font-size="11.3" fill="#14141e" textLength="22.6" lengthAdjust="spacingAndGlyphs">分足</text><text x="377" y="38.4" font-family="Liberation Sans, sans-serif" font-size="11.2" fill="#14141e" textLength="5.2" lengthAdjust="spacingAndGlyphs">1</text><text x="382.6" y="38.2" font-family="'Liberation Sans','Noto Sans CJK JP',sans-serif" font-size="11.3" fill="#14141e" textLength="22.6" lengthAdjust="spacingAndGlyphs">分足</text><text x="84.6" y="36.6" font-family="'Liberation Sans',sans-serif" font-size="11.4" fill="#000" textLength="18.8" lengthAdjust="spacingAndGlyphs">1.00</text><text x="227.2" y="36.6" font-family="'Liberation Sans',sans-serif" font-size="11.4" fill="#000" textLength="18.8" lengthAdjust="spacingAndGlyphs">1.00</text><text x="327.4" y="36.6" font-family="'Liberation Sans',sans-serif" font-size="11.4" fill="#000" textLength="21.6" lengthAdjust="spacingAndGlyphs">1200</text>
<rect x="10.2" y="4" width="13.8" height="14.2" fill="#f6f6f6"/><path d="M10.6 4V17.9H24" stroke="#808080" stroke-width="1" fill="none"/><path d="M13.850000000000001 10.1C15.200000000000001 11.96 15.200000000000001 13.82 13.850000000000001 16.3C12.5 14.440000000000001 12.5 12.27 13.850000000000001 10.1Z" fill="#ff1010"/><path d="M15.850000000000001 6.1C17.1 8.86 17.1 11.620000000000001 15.850000000000001 15.3C14.6 12.54 14.6 9.32 15.850000000000001 6.1Z" fill="#1080e0"/><path d="M18.15 5C19.5 7.1899999999999995 19.5 9.379999999999999 18.15 12.3C16.8 10.11 16.8 7.555 18.15 5Z" fill="#ff1010"/><path d="M19.95 7.1C21.2 9.02 21.2 10.94 19.95 13.5C18.7 11.579999999999998 18.7 9.34 19.95 7.1Z" fill="#1080e0"/><path d="M21.9 6.1C23.3 8.56 23.3 11.02 21.9 14.3C20.5 11.84 20.5 8.969999999999999 21.9 6.1Z" fill="#ff1010"/><rect x="1216.9" y="5.2" width="10.2" height="12.3" fill="none" stroke="#9a9a9a" stroke-width="1.1"/><rect x="1220.8" y="8.7" width="9.6" height="6.4" fill="#e2e2e2" stroke="#6a6a6a" stroke-width="1.4"/><path d="M1244.2 14.1H1249.8" stroke="#555" stroke-width="1.5"/><rect x="1264.2" y="8.6" width="7" height="6" fill="none" stroke="#555" stroke-width="1.3"/><path d="M1263.6 8.2H1271.8" stroke="#555" stroke-width="1.6"/><path d="M1283.4 7.2L1291.3 15.2M1291.3 7.2L1283.4 15.2" stroke="#555" stroke-width="1.4"/><path d="M118.7 32.2L121.7 28.8L124.7 32.2ZM118.7 34.9L121.7 38.3L124.7 34.9Z" fill="#111"/><path d="M261.9 32.2L264.9 28.8L267.9 32.2ZM261.9 34.9L264.9 38.3L267.9 34.9Z" fill="#111"/><path d="M358.9 32.2L361.9 28.8L364.9 32.2ZM358.9 34.9L361.9 38.3L364.9 34.9Z" fill="#111"/><path d="M314.3 32L320.09999999999997 32L317.2 35.6Z" fill="#111"/><path d="M411.40000000000003 32L417.2 32L414.3 35.6Z" fill="#111"/><path d="M573.4 32L579.1999999999999 32L576.3 35.6Z" fill="#111"/><rect x="430.8" y="26.8" width="13.2" height="13.5" fill="#f3f3ea"/><path d="M433.2 26.8V40.3M430.8 30.8H444" stroke="#5a5ac8" stroke-width="1.1" fill="none"/><path d="M436 33.7H440.4V35.1L438.8 35.3L441.9 38.2L440.9 39.2L437.6 36.3L437.4 38H436Z" fill="#9412a4"/><path d="M459.9 28.6L469.2 32L466.4 33.8L471 38.4L469.2 40L464.5 35.7L462.7 38.4Z" fill="#e6e2f6" stroke="#6a55c4" stroke-width="1.3" stroke-linejoin="round"/><path d="M484 40.2C482.6 37.6 481.2 35.4 481 34.4C481 33.4 482.2 33.2 483 34.2L484.3 35.8L484 29.2C484 28 485.6 28 485.8 29.2L486.3 32.4L486.6 27C486.7 25.7 488.4 25.7 488.5 27L488.7 32.2L489.6 27.8C489.9 26.6 491.4 26.9 491.3 28.1L490.9 32.8L492.2 30C492.7 29 494 29.5 493.7 30.6C493.2 33 493.2 37.4 491.2 40.2Z" fill="#fff1dc" stroke="#d48a18" stroke-width="1.1" stroke-linejoin="round"/><path d="M505.6 38.2L515.2 27.4C516.2 26.4 518.4 28.2 517.4 29.4L507.8 40Z" fill="#ffe9c4" stroke="#e49a28" stroke-width="1.2" stroke-linejoin="round"/><path d="M505.6 38.2L507.8 40L504 40.6Z" fill="#a86a14" stroke="#a86a14" stroke-width=".8"/><path d="M534.2 37.2L537.6 33.8L541.2 37.2L537.6 40.4Z" fill="#12307c"/><path d="M535.6 37.2H539.8M537.7 35.2V39.2" stroke="#8fb0ee" stroke-width=".7"/><path d="M529.2 36.6L537.8 27C538.8 26 541.4 27.8 540.4 29.2L531.8 38.8Z" fill="#a8c6ff" stroke="#2e6ee0" stroke-width="1.4" stroke-linejoin="round"/><path d="M529.2 36.6L531.8 38.8L527.2 40.2Z" fill="#2456c8" stroke="#2456c8" stroke-width=".9"/><rect x="557.1" y="27" width="13.8" height="13" fill="#dfe1e6"/><path d="M559.7 33.8V39.8M562.8000000000001 28.3V39.8M566.1 30.1V39.8M569.1 34.4V39.8" stroke="#1684ff" stroke-width="2.1"/><path d="M557.1 40.1H570.9" stroke="#8a8fa0" stroke-width=".9"/><rect x="585" y="27" width="13.8" height="13" fill="#e9e6e2"/><path d="M587.6 33.8V39.8M590.7 28.3V39.8M594 30.1V39.8M597 34.4V39.8" stroke="#1684ff" stroke-width="2.1"/><path d="M585 40.1H598.8" stroke="#8a8fa0" stroke-width=".9"/><path d="M586.9 28.4L596.6 38.1M596.5 28.4L586.9 38.1" stroke="#ff2222" stroke-width="1.7"/><path d="M621.6 28.6A5.4 5.4 0 1 0 624.6 37.4" fill="none" stroke="#1a8ce8" stroke-width="2"/><path d="M615.2 26.2H620.8V31.4Z" fill="#2244ff"/><text x="621.3" y="36.4" font-family="Liberation Sans, sans-serif" font-weight="bold" font-size="8.8" fill="#1a6ee0">R</text><path d="M1274.2 39.6L1280.8 33.2" stroke="#4646f2" stroke-width="2.6" stroke-linecap="round"/><path d="M1287.4 30.4A3.5 3.5 0 1 1 1284.2 27.2" fill="none" stroke="#5656f4" stroke-width="2.1"/>
</svg>
</div>
</body></html>
